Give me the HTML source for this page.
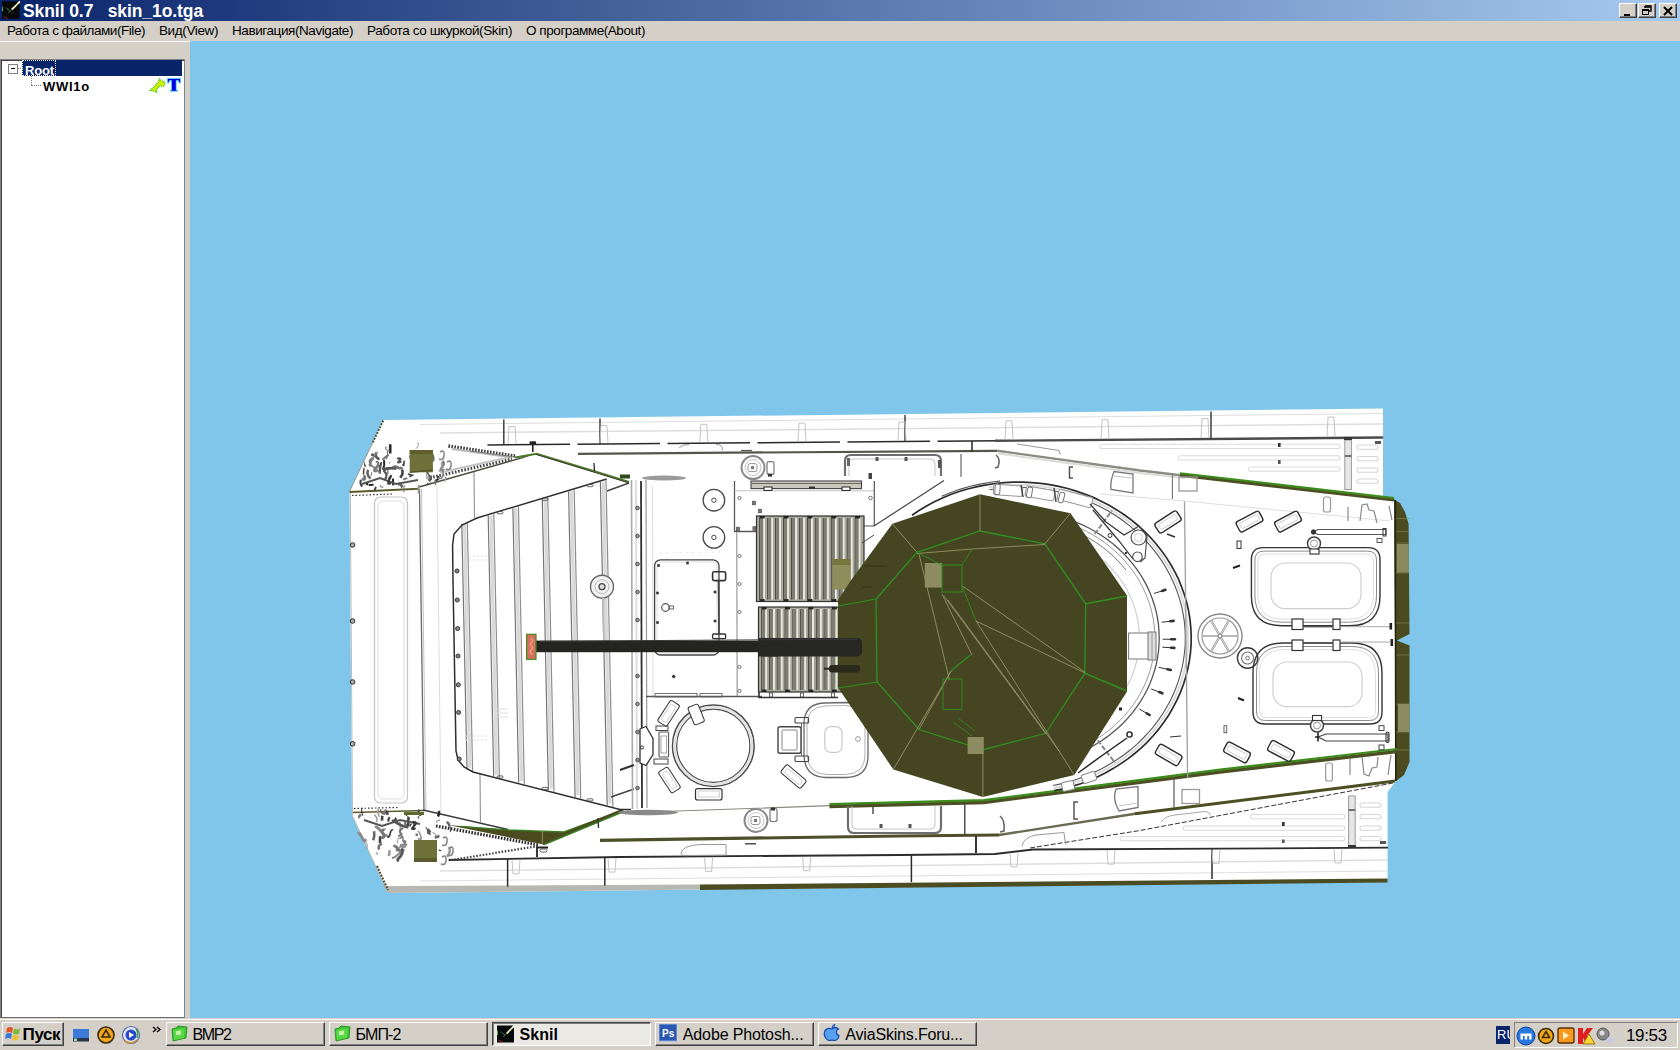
<!DOCTYPE html>
<html lang="ru">
<head>
<meta charset="utf-8">
<title>Sknil 0.7   skin_1o.tga</title>
<style>
html,body{margin:0;padding:0;}
body{width:1680px;height:1050px;overflow:hidden;background:#d4d0c8;position:relative;
 font-family:"Liberation Sans",sans-serif;color:#000;}
.abs{position:absolute;}
.t{position:absolute;white-space:pre;line-height:1;}
/* title bar */
#title{left:0;top:0;width:1680px;height:21px;background:linear-gradient(90deg,#0a246a 0%,#a6caf0 100%);}
#title .cap{left:23px;top:1.300px;font:bold 17.5px "Liberation Sans",sans-serif;color:#fff;letter-spacing:-.08px;}
.tb{position:absolute;top:2.500px;width:16px;height:13.500px;background:#d4d0c8;border:1px solid;border-color:#fff #404040 #404040 #fff;box-shadow:inset -1px -1px 0 #808080;}
/* menu */
#menu{left:0;top:21px;width:1680px;height:20px;background:#d4d0c8;}
#menu .t{top:3px;font-size:13.5px;}
/* left panel */
#left{left:0;top:41px;width:190px;height:977px;background:#d4d0c8;border-top:1px solid #fff;box-sizing:border-box;}
#tree{left:0;top:59px;width:183px;height:957px;background:#fff;border:1px solid;border-color:#808080 #7c8894 #707070 #808080;box-shadow:inset 1px 1px 0 #404040;box-sizing:content-box;}
/* canvas */
#view{left:190px;top:41px;width:1490px;height:977px;background:#7fc6ea;}
/* taskbar */
#task{left:0;top:1018px;width:1680px;height:32px;background:#d4d0c8;border-top:1px solid #d4d0c8;box-shadow:inset 0 1px 0 #fff;box-sizing:border-box;}
.btn{position:absolute;top:3px;height:22px;width:157px;background:#d4d0c8;border:1px solid;border-color:#fff #404040 #404040 #fff;box-shadow:inset -1px -1px 0 #808080;}
.btn .t{left:25.500px;top:4px;font-size:16px;}
.btn.on{border-color:#404040 #fff #fff #404040;box-shadow:inset 1px 1px 0 #808080;background:#ebe9e4;}
</style>
</head>
<body>
<!-- ===== title bar ===== -->
<div id="title" class="abs">
 <svg class="abs" style="left:2px;top:1px" width="19" height="19" viewBox="0 0 19 19">
  <rect x="0" y=".4" width="17.600" height="17.400" fill="#06080a"/>
  <path d="M17.600 -.300L18.200 1.200L10.600 9.300L8.900 8.100Z" fill="#e6e6b4"/>
  <path d="M17.600 -.300L18.200 1.200L16.600 2.900L15.600 1.900Z" fill="#fff"/>
  <path d="M9.700 8.700L6.400 12M4 6.500L8 10.500" stroke="#3c7c34" stroke-width="1"/>
  <rect x="0" y="5.600" width=".9" height="4.800" fill="#60c040"/>
  <path d="M1.500 15.500l2 1 2 1" stroke="#7a1c1c" stroke-width="1.200"/>
  <circle cx="11" cy="12" r=".6" fill="#3c6c3c"/><circle cx="6" cy="8" r=".6" fill="#3c6c3c"/>
 </svg>
 <span class="t cap">Sknil 0.7   skin_1o.tga</span>
 <div class="tb" style="left:1619px"><svg width="16" height="14"><rect x="4" y="10" width="6" height="2" fill="#000"/></svg></div>
 <div class="tb" style="left:1638px"><svg width="16" height="14"><path d="M6 2h6v5h-2M6 2v2M6 3h6" stroke="#000" stroke-width="1.4" fill="none"/><rect x="3.5" y="5.5" width="6" height="5" fill="none" stroke="#000"/><path d="M3 6h7" stroke="#000" stroke-width="2"/></svg></div>
 <div class="tb" style="left:1659px"><svg width="16" height="14"><path d="M4 3l8 8M12 3l-8 8" stroke="#000" stroke-width="2"/></svg></div>
</div>
<!-- ===== menu ===== -->
<div id="menu" class="abs">
 <span class="t" style="left:7px;letter-spacing:-.45px">Работа с файлами(File)</span>
 <span class="t" style="left:159px;letter-spacing:-.38px">Вид(View)</span>
 <span class="t" style="left:232px;letter-spacing:-.42px">Навигация(Navigate)</span>
 <span class="t" style="left:367px;letter-spacing:-.38px">Работа со шкуркой(Skin)</span>
 <span class="t" style="left:526px;letter-spacing:-.44px">О программе(About)</span>
</div>
<!-- ===== left tree panel ===== -->
<div id="left" class="abs"></div>
<div id="tree" class="abs">
 <div class="abs" style="left:21px;top:0;width:160px;height:16px;background:#0a246a"></div>
 <div class="abs" style="left:7px;top:4px;width:8px;height:8px;border:1px solid #808080;background:#fff"></div>
 <div class="abs" style="left:10px;top:8px;width:4px;height:1px;background:#000"></div>
 <div class="abs" style="left:17px;top:8px;width:5px;height:0;border-top:1px dotted #808080"></div>
 <div class="abs" style="left:30px;top:16px;width:0;height:9px;border-left:1px dotted #808080"></div>
 <div class="abs" style="left:30px;top:25px;width:10px;height:0;border-top:1px dotted #808080"></div>
 <span class="t" style="left:24px;top:2.700px;font:bold 13px 'Liberation Sans',sans-serif;color:#fff;letter-spacing:-.15px">Root</span>
 <div class="abs" style="left:21px;top:0;width:34px;height:15px;border:1px dotted #e8e8e8;box-sizing:border-box;height:16px"></div>
 <span class="t" style="left:42px;top:18.600px;font:bold 13px 'Liberation Sans',sans-serif;letter-spacing:.74px">WWI1o</span>
 <svg class="abs" style="left:148px;top:17px" width="34" height="16" viewBox="0 0 34 16">
  <path transform="translate(0 .7)" d="M1.200 12.600L6 8L9.500 4L10.300 1.200L13 3L15.800 4.600L15.600 7L14.500 8.600L11 8.400L8 11L7.500 14.700L5 13.500Z" fill="#d4f000" stroke="#34c028" stroke-width="1.300" stroke-dasharray="1 .8"/>
  <path d="M18.400 1.400H31.500V6.100H30.300L29.300 3.600H27.200V13L28.400 13.200V14.200H21.500V13.200L22.500 13V3.600H20.600L19.600 6.100H18.400Z" fill="#0000e0" stroke="#48e8ff" stroke-width=".7"/>
 </svg>
</div>
<!-- ===== 3D view ===== -->
<div id="view" class="abs"></div>
<!--TANKSTART-->
<svg class="abs" style="left:190px;top:41px" width="1490" height="977" viewBox="190 41 1490 977">
<!-- hull -->
<g id="hull">
<polygon points="383,420 1383,408.5 1383,497 1394,499.5 1396,781 1387.6,792 1387.6,882 388,893 352,815 349.5,492" fill="#fff" stroke="none" stroke-width="1" />
<polygon points="388,893 700,889.5 700,884.5 384,886" fill="#b8b8b2" stroke="none" stroke-width="1" />
<polygon points="700,890 1387.6,882.5 1387.6,878.5 700,884.5" fill="#4c4c22" stroke="none" stroke-width="1" />
<polygon points="1394,499.5 1400,503 1405,512 1408.6,524 1409.5,634 1397,640.5 1409.5,645.5 1409.5,762 1404,775 1396,781" fill="#4b4b1f" stroke="none" stroke-width="1" />
<polygon points="1396.5,544 1408.8,544 1409,572.6 1396.5,572.6" fill="#8a8a5c" stroke="none" stroke-width="1" />
<polygon points="1398,704 1409.5,704 1409.5,732 1398,732" fill="#8c8c62" stroke="none" stroke-width="1" />
<line x1="1395.3" y1="500" x2="1395.8" y2="781" stroke="#26260e" stroke-width="1.6" />
<line x1="1396" y1="518.6" x2="1409.5" y2="518.6" stroke="#8a8a58" stroke-width="0.6" />
<line x1="1396" y1="531.4" x2="1409.5" y2="531.4" stroke="#8a8a58" stroke-width="0.6" />
<line x1="1396" y1="543" x2="1409.5" y2="543" stroke="#8a8a58" stroke-width="0.6" />
<line x1="1396" y1="573" x2="1409.5" y2="573" stroke="#8a8a58" stroke-width="0.6" />
<line x1="1396" y1="623" x2="1409.5" y2="623" stroke="#8a8a58" stroke-width="0.6" />
<line x1="1396" y1="655" x2="1409.5" y2="655" stroke="#8a8a58" stroke-width="0.6" />
<line x1="1396" y1="704" x2="1409.5" y2="704" stroke="#8a8a58" stroke-width="0.6" />
<line x1="1396" y1="732" x2="1409.5" y2="732" stroke="#8a8a58" stroke-width="0.6" />
<line x1="1396" y1="750" x2="1409.5" y2="750" stroke="#8a8a58" stroke-width="0.6" />
<polyline points="487.5,445 1000,440.7" fill="none" stroke="#2a2a2a" stroke-width="1.5" stroke-dasharray="82.5 7.5"/>
<polyline points="995,440.8 1383,437.5" fill="none" stroke="#4a4a4a" stroke-width="2.4" />
<polyline points="448.6,860 620,857 900,855 995,854 1033,849.5 1220,848.6 1388,847.6" fill="none" stroke="#2c2c2c" stroke-width="1.8" />
<polyline points="420,424.5 1383,413.5" fill="none" stroke="#dedede" stroke-width="1" />
<polyline points="440,433 1383,424" fill="none" stroke="#dedede" stroke-width="1.5" />
<polyline points="440,871 1388,860" fill="none" stroke="#dedede" stroke-width="1.5" />
<polyline points="420,881 1388,871" fill="none" stroke="#dedede" stroke-width="1" />
<line x1="503.8" y1="419.6" x2="503.8" y2="444.9" stroke="#333" stroke-width="1.4" />
<line x1="600" y1="418.5" x2="600" y2="444.1" stroke="#333" stroke-width="1.4" />
<line x1="905" y1="415" x2="905" y2="441.5" stroke="#333" stroke-width="1.4" />
<line x1="1211" y1="411.5" x2="1211" y2="438.9" stroke="#333" stroke-width="1.4" />
<line x1="507.6" y1="859" x2="507.6" y2="886.7" stroke="#2c2c2c" stroke-width="1.5" />
<line x1="604.8" y1="857.3" x2="604.8" y2="885.6" stroke="#2c2c2c" stroke-width="1.5" />
<line x1="911.4" y1="854.9" x2="911.4" y2="882.2" stroke="#2c2c2c" stroke-width="1.5" />
<line x1="1212" y1="848.6" x2="1212" y2="878.9" stroke="#2c2c2c" stroke-width="1.5" />
<polyline points="508,443.8 509,426.5 515,426.5 516,443.8" fill="none" stroke="#c4c4c4" stroke-width="1" />
<polyline points="600,443 601,425.5 607,425.5 608,443" fill="none" stroke="#c4c4c4" stroke-width="1" />
<polyline points="699.8,442.2 700.8,424.3 706.8,424.3 707.8,442.2" fill="none" stroke="#c4c4c4" stroke-width="1" />
<polyline points="798,441.4 799,423.2 805,423.2 806,441.4" fill="none" stroke="#c4c4c4" stroke-width="1" />
<polyline points="898,440.5 899,422 905,422 906,440.5" fill="none" stroke="#c4c4c4" stroke-width="1" />
<polyline points="1005,439.6 1006,420.8 1012,420.8 1013,439.6" fill="none" stroke="#c4c4c4" stroke-width="1" />
<polyline points="1101,438.8 1102,419.7 1108,419.7 1109,438.8" fill="none" stroke="#c4c4c4" stroke-width="1" />
<polyline points="1201,438 1202,418.5 1208,418.5 1209,438" fill="none" stroke="#c4c4c4" stroke-width="1" />
<polyline points="1327,436.9 1328,417.1 1334,417.1 1335,436.9" fill="none" stroke="#c4c4c4" stroke-width="1" />
<polyline points="512,859.8 513,873.8 519,873.8 520,859.8" fill="none" stroke="#c4c4c4" stroke-width="1" />
<polyline points="608,858.1 609,872.1 615,872.1 616,858.1" fill="none" stroke="#c4c4c4" stroke-width="1" />
<polyline points="704.6,857.4 705.6,871.4 711.6,871.4 712.6,857.4" fill="none" stroke="#c4c4c4" stroke-width="1" />
<polyline points="802.7,856.7 803.7,870.7 809.7,870.7 810.7,856.7" fill="none" stroke="#c4c4c4" stroke-width="1" />
<polyline points="1010,852.8 1011,866.8 1017,866.8 1018,852.8" fill="none" stroke="#c4c4c4" stroke-width="1" />
<polyline points="1107,850.1 1108,864.1 1114,864.1 1115,850.1" fill="none" stroke="#c4c4c4" stroke-width="1" />
<polyline points="1212,849.6 1213,863.6 1219,863.6 1220,849.6" fill="none" stroke="#c4c4c4" stroke-width="1" />
<polyline points="1334,848.9 1335,862.9 1341,862.9 1342,848.9" fill="none" stroke="#c4c4c4" stroke-width="1" />
<polyline points="578,453.8 997.5,450.8" fill="none" stroke="#555548" stroke-width="2.2" />
<polyline points="997.5,450.8 1140,470.5 1185,475.7" fill="none" stroke="#8c8c84" stroke-width="2.4" />
<polyline points="997.5,453.4 1140,473 1185,478.3" fill="none" stroke="#dcdcd8" stroke-width="2" />
<polyline points="1180,475.2 1394,500" fill="none" stroke="#4e4e24" stroke-width="3.2" />
<polyline points="1180,473.2 1394,498" fill="none" stroke="#3c8c1c" stroke-width="2" />
<polyline points="600,840.3 900,836 999,835" fill="none" stroke="#4e4e2a" stroke-width="3.2" />
<polyline points="999,835 1140,813" fill="none" stroke="#6a6a52" stroke-width="2.4" />
<polyline points="1135,813.8 1395,781" fill="none" stroke="#4e4e24" stroke-width="3" />
<polyline points="620,813 829.5,805.7 983.8,801.5" fill="none" stroke="#8a8a80" stroke-width="1.2" />
<polyline points="829.5,806.5 983.8,802.5 1220,772 1397,751.5" fill="none" stroke="#4e4e24" stroke-width="3.4" />
<polyline points="829.5,804.2 983.8,800.2 1220,769.6 1397,749" fill="none" stroke="#3c8c1c" stroke-width="2.2" />
<polyline points="1030,848 1140,830.5 1393,783" fill="none" stroke="#333" stroke-width="1" stroke-dasharray="5 2"/>
</g>
<!-- front -->
<g id="front">
<line x1="349.5" y1="492" x2="419" y2="488.8" stroke="#5a5a2c" stroke-width="2" />
<line x1="352" y1="495.5" x2="392" y2="494" stroke="#333" stroke-width="1.2" stroke-dasharray="1.5 2"/>
<line x1="352" y1="812.5" x2="424" y2="810.5" stroke="#5a5a2c" stroke-width="1.6" />
<line x1="354" y1="808.5" x2="398" y2="807.5" stroke="#333" stroke-width="1.2" stroke-dasharray="1.5 2"/>
<line x1="419.5" y1="489" x2="424" y2="811" stroke="#6a6a6a" stroke-width="1.3" />
<line x1="421.5" y1="489" x2="426" y2="811" stroke="#c4c4c4" stroke-width="1" />
<rect x="374.5" y="497" width="33" height="306" rx="6" fill="none" stroke="#c4c4c4" stroke-width="1.2" />
<rect x="378" y="501" width="26" height="298" rx="5" fill="none" stroke="#dedede" stroke-width="1" />
<line x1="350.3" y1="493" x2="352.5" y2="815" stroke="#bbb" stroke-width="1" />
<circle cx="352.6" cy="545" r="2.3" fill="#aaa" stroke="#333" stroke-width="1" />
<circle cx="352.6" cy="621" r="2.3" fill="#aaa" stroke="#333" stroke-width="1" />
<circle cx="352.6" cy="682" r="2.3" fill="#aaa" stroke="#333" stroke-width="1" />
<circle cx="352.6" cy="743.8" r="2.3" fill="#aaa" stroke="#333" stroke-width="1" />
<line x1="437" y1="486" x2="441" y2="812" stroke="#dedede" stroke-width="1" />
<line x1="474" y1="472" x2="474.5" y2="518" stroke="#999" stroke-width="1.2" />
<line x1="480" y1="774" x2="480.5" y2="822" stroke="#999" stroke-width="1.2" />
<line x1="383.3" y1="420.5" x2="372" y2="444" stroke="#4a4a24" stroke-width="1.8" stroke-dasharray="2 1.2"/>
<line x1="372" y1="444" x2="349.5" y2="491.5" stroke="#9a9a90" stroke-width="1" />
<polyline points="419,487 522.7,457.6 532,454.5" fill="none" stroke="#4a4a3c" stroke-width="1.3" />
<line x1="448.4" y1="446" x2="515" y2="456" stroke="#3a3a3a" stroke-width="3.4" stroke-dasharray="1.6 1.4"/>
<line x1="452" y1="449" x2="512" y2="457.5" stroke="#bbb" stroke-width="2" />
<line x1="430" y1="477.8" x2="512" y2="459" stroke="#444" stroke-width="3" stroke-dasharray="1.6 1.6"/>
<line x1="440" y1="472.5" x2="508" y2="457.5" stroke="#c4c4c4" stroke-width="2" />
<line x1="470" y1="451" x2="515" y2="457" stroke="#777" stroke-width="1" />
<path d="M386.5 459.4q1.8 -4.3 0.9 -8.6" fill="none" stroke="#666" stroke-width="1" />
<path d="M390.2 453.5q0.1 -4.6 0 -9.3" fill="none" stroke="#2a2a2a" stroke-width="2.6" />
<path d="M364.1 468.1q-0.9 3.3 -0.5 6.5" fill="none" stroke="#444" stroke-width="1.5" />
<path d="M413.5 475.1q-5.3 0.9 -2.6 1.7" fill="none" stroke="#444" stroke-width="1.5" />
<path d="M362.1 486.8q-2.5 -3.6 -1.3 -7.1" fill="none" stroke="#444" stroke-width="2" />
<path d="M407.3 478.2q-4.8 0.7 -2.4 1.4" fill="none" stroke="#777" stroke-width="2" />
<path d="M366.6 482.7q0.8 1.2 0.4 2.4" fill="none" stroke="#2a2a2a" stroke-width="2.6" />
<path d="M426.4 471q5.1 -1.4 2.5 -2.8" fill="none" stroke="#777" stroke-width="1.5" />
<path d="M419.5 463.1q0.9 0.3 0.4 0.5" fill="none" stroke="#999" stroke-width="2.6" />
<path d="M383.3 487.2q-4.6 -0.8 -2.3 -1.6" fill="none" stroke="#999" stroke-width="1.5" />
<path d="M440.1 469.2q5.5 -4.2 2.8 -8.4" fill="none" stroke="#666" stroke-width="2" />
<path d="M387.9 468.1q-0 3 -0 5.9" fill="none" stroke="#444" stroke-width="1" />
<path d="M441.1 470.8q2 -4.4 1 -8.8" fill="none" stroke="#999" stroke-width="2.6" />
<path d="M383 469.6q2 -4.8 1 -9.5" fill="none" stroke="#2a2a2a" stroke-width="2" />
<path d="M372.8 457.7q-5.3 2.7 -2.6 5.4" fill="none" stroke="#777" stroke-width="1.5" />
<path d="M393 485.2q-0 -3.3 -0 -6.7" fill="none" stroke="#2a2a2a" stroke-width="2" />
<path d="M435.7 480.7q4.4 -2.2 2.2 -4.4" fill="none" stroke="#2a2a2a" stroke-width="2" />
<path d="M418.1 468.4q-3.2 -4.2 -1.6 -8.3" fill="none" stroke="#777" stroke-width="1.5" />
<path d="M415.9 448.8q4 -3.2 2 -6.4" fill="none" stroke="#999" stroke-width="1" />
<path d="M370.8 475.8q1.3 -1.8 0.7 -3.6" fill="none" stroke="#777" stroke-width="1" />
<path d="M398.2 483.7q5.4 1.8 2.7 3.6" fill="none" stroke="#666" stroke-width="2.6" />
<path d="M393 469.6q-0.2 -1 -0.1 -2" fill="none" stroke="#777" stroke-width="1" />
<path d="M444.7 469.6q-4.7 1 -2.3 2" fill="none" stroke="#444" stroke-width="1" />
<path d="M407.9 473.9q5.4 1.1 2.7 2.3" fill="none" stroke="#444" stroke-width="1.5" />
<path d="M412 458.8q-3 -1.5 -1.5 -3.1" fill="none" stroke="#999" stroke-width="2.6" />
<path d="M368.8 485.1q5.9 -0.3 3 -0.7" fill="none" stroke="#2a2a2a" stroke-width="2" />
<path d="M365.6 466.5q-1.9 -2.4 -0.9 -4.7" fill="none" stroke="#777" stroke-width="1" />
<path d="M376.1 486.9q-1.7 1.9 -0.8 3.8" fill="none" stroke="#444" stroke-width="2" />
<path d="M444.1 481.4q2.4 -2.4 1.2 -4.8" fill="none" stroke="#999" stroke-width="1.5" />
<path d="M389.3 462.8q0.5 0 0.2 0.1" fill="none" stroke="#777" stroke-width="1.5" />
<path d="M428.9 481q2.9 -2.7 1.4 -5.5" fill="none" stroke="#666" stroke-width="2.6" />
<path d="M389.3 451q-5.7 -2.2 -2.8 -4.4" fill="none" stroke="#999" stroke-width="1.5" />
<path d="M418.9 484.9q-0.6 4.4 -0.3 8.7" fill="none" stroke="#999" stroke-width="2" />
<path d="M365.1 467.2q-0.4 -1.6 -0.2 -3.2" fill="none" stroke="#2a2a2a" stroke-width="1" />
<path d="M400.2 477.7q3.6 -4.2 1.8 -8.3" fill="none" stroke="#444" stroke-width="2.6" />
<path d="M426.8 479.3q-0.3 -3.2 -0.1 -6.4" fill="none" stroke="#999" stroke-width="1" />
<path d="M428.5 484.8q-1.2 -1 -0.6 -2" fill="none" stroke="#444" stroke-width="1.5" />
<path d="M373 458.3q-4.2 4 -2.1 8.1" fill="none" stroke="#777" stroke-width="2.6" />
<path d="M415.8 467.4q0.6 -3.7 0.3 -7.4" fill="none" stroke="#444" stroke-width="1" />
<path d="M404.3 485q-0.8 3.7 -0.4 7.4" fill="none" stroke="#777" stroke-width="1" />
<path d="M380.2 466.1q-3.1 0.9 -1.6 1.7" fill="none" stroke="#999" stroke-width="2.6" />
<path d="M431.4 453.3q2.9 4 1.4 8" fill="none" stroke="#666" stroke-width="2.6" />
<path d="M430.8 482.4q-4.4 -3.5 -2.2 -7" fill="none" stroke="#666" stroke-width="1" />
<path d="M434.8 479.6q1.3 2.8 0.7 5.5" fill="none" stroke="#777" stroke-width="1.5" />
<path d="M370.5 478.6q-4.6 -4.4 -2.3 -8.8" fill="none" stroke="#666" stroke-width="2.6" />
<path d="M427 456.3q0.7 -2.5 0.4 -5" fill="none" stroke="#999" stroke-width="1" />
<polyline points="362,484 380,478 396,484 418,480" fill="none" stroke="#555" stroke-width="2" />
<path d="M393.7 466.8c7.6 -0.6 0.1 1.6 7.8 1.4" fill="none" stroke="#777" stroke-width="2.8" stroke-linecap="round"/>
<path d="M395.3 468.4c-5.6 -1 -6.4 0.7 -12.1 0.4" fill="none" stroke="#555" stroke-width="2.8" stroke-linecap="round"/>
<path d="M430.8 478.9c2.8 2.1 -6.2 -8.7 -3.4 -8.1" fill="none" stroke="#555" stroke-width="1.6" stroke-linecap="round"/>
<path d="M364.5 476.4c1.8 5 -3.1 1.6 -1.3 3.1" fill="none" stroke="#777" stroke-width="2.8" stroke-linecap="round"/>
<path d="M378.4 458.8c-8.9 -7.5 2.8 -1.7 -6.1 -3.9" fill="none" stroke="#555" stroke-width="2.8" stroke-linecap="round"/>
<path d="M379.8 472.7c0.2 -8.5 1.1 -7.1 1.4 -9.6" fill="none" stroke="#555" stroke-width="2.2" stroke-linecap="round"/>
<path d="M389.1 478.7c6.3 -9 -5.2 7.4 1 4.7" fill="none" stroke="#3a3a3a" stroke-width="2.2" stroke-linecap="round"/>
<path d="M400.6 461.9c-7.7 2.3 5 -4.1 -2.7 -3.4" fill="none" stroke="#555" stroke-width="2.2" stroke-linecap="round"/>
<path d="M385.3 478.9c4.6 -6.9 -4.6 -7.2 0.1 -9.2" fill="none" stroke="#555" stroke-width="2.2" stroke-linecap="round"/>
<path d="M387.8 455.3c1.1 -0.9 -5.6 4.2 -4.5 3.9" fill="none" stroke="#777" stroke-width="2.2" stroke-linecap="round"/>
<path d="M377.1 453.5c-1.4 -5.2 -4.1 8.5 -5.6 6.9" fill="none" stroke="#8a8a8a" stroke-width="1.6" stroke-linecap="round"/>
<path d="M376.7 461.8c6.4 2.6 -7.2 8.8 -0.8 9.6" fill="none" stroke="#777" stroke-width="2.2" stroke-linecap="round"/>
<path d="M380.1 473.2c-3.1 -3.7 -7.7 -7.4 -10.8 -8.5" fill="none" stroke="#777" stroke-width="1.6" stroke-linecap="round"/>
<path d="M404.1 461.2c-0.8 8.3 -0.3 1.3 -1.1 3.8" fill="none" stroke="#3a3a3a" stroke-width="1.6" stroke-linecap="round"/>
<path d="M440 452q5 -3 4 4q-1 5 -5 3" fill="none" stroke="#888" stroke-width="1.6" />
<path d="M447 462q5 -3 4 4q-1 5 -5 3" fill="none" stroke="#888" stroke-width="1.6" />
<path d="M439 471q5 -3 4 4q-1 5 -5 3" fill="none" stroke="#888" stroke-width="1.6" />
<rect x="409.7" y="450" width="23.2" height="22.3" rx="0" fill="#70703a" stroke="none" stroke-width="1" />
<rect x="409.7" y="450" width="23.2" height="4" rx="0" fill="#5e5e2e" stroke="none" stroke-width="1" />
<line x1="409.7" y1="472.3" x2="433" y2="470" stroke="#56562a" stroke-width="1.6" />
<polyline points="515,457.6 536.6,453.8 600,473 629,482" fill="none" stroke="#4c7a2a" stroke-width="2" />
<polyline points="536.6,454.6 600,474 629,483" fill="none" stroke="#3c3c30" stroke-width="1" />
<rect x="529.6" y="441.4" width="6.5" height="3" rx="0" fill="#222" stroke="none" stroke-width="1" />
<line x1="532.8" y1="441.4" x2="532.8" y2="452" stroke="#222" stroke-width="1.6" />
<line x1="594" y1="463" x2="594.5" y2="471" stroke="#333" stroke-width="1.4" />
<line x1="352" y1="815" x2="388" y2="893" stroke="#b8b8b0" stroke-width="1" />
<line x1="377" y1="866" x2="388" y2="890" stroke="#4a4a24" stroke-width="2" stroke-dasharray="2 1.2"/>
<polyline points="423,810 508,829.5" fill="none" stroke="#3a3a3a" stroke-width="1.3" />
<polygon points="448,825 508,830 564,832 623,810.2 542.4,844.2" fill="#4b4b1f" stroke="none" stroke-width="1" />
<polyline points="460,826.5 508,830 564,832 623,810.2" fill="none" stroke="#3c7a22" stroke-width="1.4" />
<line x1="542.4" y1="843.6" x2="623" y2="810.2" stroke="#4b4b1f" stroke-width="3.4" />
<line x1="544" y1="844.6" x2="623" y2="811.8" stroke="#3c7a22" stroke-width="1.6" />
<line x1="542.4" y1="830" x2="542.4" y2="844" stroke="#a0a070" stroke-width="0.8" />
<line x1="436" y1="826" x2="539" y2="845" stroke="#2a2a2a" stroke-width="3.2" stroke-dasharray="1.6 1.4"/>
<line x1="451" y1="860" x2="539" y2="846" stroke="#444" stroke-width="2.2" stroke-dasharray="1.6 1.6"/>
<path d="M428 828.9q0.7 2.6 0.4 5.2" fill="none" stroke="#444" stroke-width="2.6" />
<path d="M388.7 856.1q1.3 -3 0.6 -6" fill="none" stroke="#999" stroke-width="2.6" />
<path d="M404.7 845.2q0.1 -2.5 0 -5" fill="none" stroke="#666" stroke-width="2" />
<path d="M441.2 850.7q-3.6 -0.5 -1.8 -1" fill="none" stroke="#2a2a2a" stroke-width="1" />
<path d="M394.5 821q2.1 -0.7 1 -1.4" fill="none" stroke="#777" stroke-width="2" />
<path d="M429 851q-4.1 2.2 -2.1 4.3" fill="none" stroke="#999" stroke-width="1.5" />
<path d="M382.3 815.8q-0.4 2.5 -0.2 4.9" fill="none" stroke="#444" stroke-width="2.6" />
<path d="M437.9 816.4q2 -2.8 1 -5.5" fill="none" stroke="#2a2a2a" stroke-width="2.6" />
<path d="M389.8 817.2q-2.2 2.2 -1.1 4.4" fill="none" stroke="#444" stroke-width="2" />
<path d="M408.8 825.8q-5.8 -1.7 -2.9 -3.4" fill="none" stroke="#666" stroke-width="2" />
<path d="M405.1 814.5q5.8 2.9 2.9 5.8" fill="none" stroke="#444" stroke-width="1" />
<path d="M383.4 814.3q3.3 -2.3 1.7 -4.6" fill="none" stroke="#777" stroke-width="2.6" />
<path d="M434.8 837.5q5.4 -0.9 2.7 -1.9" fill="none" stroke="#666" stroke-width="2.6" />
<path d="M421.6 814.9q-5.3 1.9 -2.7 3.8" fill="none" stroke="#2a2a2a" stroke-width="1" />
<path d="M383.7 814.1q-4.9 -2.4 -2.5 -4.8" fill="none" stroke="#666" stroke-width="1.5" />
<path d="M399.9 821.8q0.6 4.3 0.3 8.5" fill="none" stroke="#999" stroke-width="1.5" />
<path d="M363.8 839.4q5.3 4.7 2.6 9.4" fill="none" stroke="#999" stroke-width="1" />
<path d="M375.9 853.3q1.5 0.3 0.8 0.6" fill="none" stroke="#777" stroke-width="2" />
<path d="M399.2 837.3q-2.8 3 -1.4 6.1" fill="none" stroke="#999" stroke-width="1" />
<path d="M408.5 817.1q-0.3 4.3 -0.2 8.7" fill="none" stroke="#444" stroke-width="2.6" />
<path d="M417.8 830.7q4.7 4.7 2.3 9.4" fill="none" stroke="#999" stroke-width="1.5" />
<path d="M446.5 821.9q4 2.1 2 4.1" fill="none" stroke="#777" stroke-width="2.6" />
<path d="M447.1 856.7q4 -4.9 2 -9.7" fill="none" stroke="#999" stroke-width="2.6" />
<path d="M374.4 814.8q4.1 3.7 2 7.4" fill="none" stroke="#999" stroke-width="1.5" />
<path d="M421 814.3q-3.8 -2.3 -1.9 -4.6" fill="none" stroke="#444" stroke-width="2" />
<path d="M392 821.4q5.8 -1.8 2.9 -3.5" fill="none" stroke="#444" stroke-width="2" />
<path d="M379.2 816.9q-2 -4.2 -1 -8.3" fill="none" stroke="#999" stroke-width="1.5" />
<path d="M381.8 843.3q-4.9 3.2 -2.5 6.3" fill="none" stroke="#777" stroke-width="2.6" />
<path d="M411.6 823.9q-2.4 1.3 -1.2 2.6" fill="none" stroke="#444" stroke-width="1.5" />
<path d="M417.9 839.8q4.5 -1.1 2.3 -2.2" fill="none" stroke="#999" stroke-width="2.6" />
<path d="M373.2 840.3q1.7 -4.6 0.9 -9.1" fill="none" stroke="#666" stroke-width="2.6" />
<path d="M424.6 845.5q-4.3 0.2 -2.2 0.5" fill="none" stroke="#666" stroke-width="1" />
<path d="M432.7 832.6q4.7 1.8 2.4 3.7" fill="none" stroke="#777" stroke-width="1" />
<path d="M362.7 815.7q-1.7 -4 -0.8 -7.9" fill="none" stroke="#2a2a2a" stroke-width="1" />
<path d="M415.2 834.8q2.2 -0.1 1.1 -0.2" fill="none" stroke="#444" stroke-width="2.6" />
<path d="M430.2 841.7q0 0.4 0 0.7" fill="none" stroke="#666" stroke-width="1" />
<path d="M425.6 827.3q3.7 3.5 1.9 6.9" fill="none" stroke="#777" stroke-width="1.5" />
<path d="M380.3 836.1q-0.5 3.5 -0.2 6.9" fill="none" stroke="#444" stroke-width="2.6" />
<path d="M440.1 820q-5.4 1.3 -2.7 2.7" fill="none" stroke="#777" stroke-width="1" />
<path d="M412.8 821.5q1.8 1.9 0.9 3.9" fill="none" stroke="#666" stroke-width="1.5" />
<path d="M361.1 814.5q-2.8 1.7 -1.4 3.4" fill="none" stroke="#777" stroke-width="2.6" />
<path d="M385.6 829.3q-0.4 -0.3 -0.2 -0.7" fill="none" stroke="#444" stroke-width="1.5" />
<path d="M387.4 814.9q-0.3 -2.1 -0.2 -4.2" fill="none" stroke="#444" stroke-width="2.6" />
<path d="M447.5 823.6q5 4.3 2.5 8.6" fill="none" stroke="#444" stroke-width="1" />
<polyline points="364,820 382,826 400,820 420,824" fill="none" stroke="#555" stroke-width="2" />
<path d="M396.7 850.4c7.1 -7.5 1.7 -1.4 8.7 -3.6" fill="none" stroke="#8a8a8a" stroke-width="1.6" stroke-linecap="round"/>
<path d="M414.8 828.6c-8.7 2.2 7.2 -7.1 -1.5 -6.4" fill="none" stroke="#3a3a3a" stroke-width="2.2" stroke-linecap="round"/>
<path d="M365.4 840.1c-1.2 4.9 -5.3 -8.4 -6.5 -6.9" fill="none" stroke="#8a8a8a" stroke-width="2.8" stroke-linecap="round"/>
<path d="M376 826.9c4.2 1.2 6.5 8.4 10.7 8.8" fill="none" stroke="#8a8a8a" stroke-width="2.8" stroke-linecap="round"/>
<path d="M400.2 838.3c5.7 -5.8 -0.3 5.2 5.4 3.5" fill="none" stroke="#777" stroke-width="1.6" stroke-linecap="round"/>
<path d="M387.9 837.1c3.1 0.4 1.5 -7.5 4.6 -7.4" fill="none" stroke="#3a3a3a" stroke-width="1.6" stroke-linecap="round"/>
<path d="M403.8 850.1c-3.9 1.6 -7 7.2 -11 7.7" fill="none" stroke="#8a8a8a" stroke-width="2.2" stroke-linecap="round"/>
<path d="M402.4 828.3c-7.1 5.1 3.7 5.9 -3.3 7.4" fill="none" stroke="#777" stroke-width="2.2" stroke-linecap="round"/>
<path d="M402.2 849.4c1.7 8 -6 8.6 -4.3 11" fill="none" stroke="#555" stroke-width="2.8" stroke-linecap="round"/>
<path d="M393.1 820.7c5.6 3.4 8.5 5.5 14.1 6.5" fill="none" stroke="#555" stroke-width="2.8" stroke-linecap="round"/>
<path d="M430.1 834.2c-7.3 -8.7 5.2 -0.2 -2.1 -2.8" fill="none" stroke="#555" stroke-width="1.6" stroke-linecap="round"/>
<path d="M382.5 837.5c4.6 -0.7 -3.7 -7.4 0.9 -7.6" fill="none" stroke="#777" stroke-width="2.8" stroke-linecap="round"/>
<path d="M402.1 846c-4.4 -1.4 7.2 -1 2.8 -1.4" fill="none" stroke="#8a8a8a" stroke-width="2.8" stroke-linecap="round"/>
<path d="M394.5 846c7.1 3.4 -1.6 3.5 5.5 4.5" fill="none" stroke="#777" stroke-width="2.8" stroke-linecap="round"/>
<path d="M443 838q5 -3 4 4q-1 5 -5 3" fill="none" stroke="#888" stroke-width="1.6" />
<path d="M449 848q5 -3 4 4q-1 5 -5 3" fill="none" stroke="#888" stroke-width="1.6" />
<path d="M442 857q5 -3 4 4q-1 5 -5 3" fill="none" stroke="#888" stroke-width="1.6" />
<rect x="414" y="840" width="23" height="22" rx="0" fill="#70703a" stroke="none" stroke-width="1" />
<rect x="414" y="858" width="23" height="4" rx="0" fill="#5a5a2c" stroke="none" stroke-width="1" />
<rect x="404" y="812" width="20" height="3" rx="0" fill="#5a6a2c" stroke="none" stroke-width="1" />
<polyline points="537,857 537,847.5 548,847.5" fill="none" stroke="#222" stroke-width="1.8" />
<rect x="540" y="849" width="7" height="3" rx="1.5" fill="none" stroke="#333" stroke-width="0.8" />
<line x1="598" y1="818" x2="598.5" y2="828" stroke="#333" stroke-width="1.4" />
<line x1="461.8" y1="523.6" x2="467" y2="769.5" stroke="#767676" stroke-width="1.2" />
<line x1="467.3" y1="521.9" x2="472.6" y2="770.9" stroke="#8e8e8e" stroke-width="1.2" />
<line x1="464.6" y1="523.7" x2="469.8" y2="767.9" stroke="#dadada" stroke-width="3.4" />
<line x1="488.2" y1="515.6" x2="493.7" y2="776.3" stroke="#767676" stroke-width="1.2" />
<line x1="493.8" y1="514" x2="499.4" y2="777.7" stroke="#8e8e8e" stroke-width="1.2" />
<line x1="491" y1="515.7" x2="496.5" y2="774.7" stroke="#dadada" stroke-width="3.4" />
<line x1="512.9" y1="508.2" x2="518.7" y2="782.6" stroke="#767676" stroke-width="1.2" />
<line x1="518.4" y1="506.5" x2="524.3" y2="784.1" stroke="#8e8e8e" stroke-width="1.2" />
<line x1="515.6" y1="508.2" x2="521.5" y2="781" stroke="#dadada" stroke-width="3.4" />
<line x1="542.3" y1="499.4" x2="548.4" y2="790.2" stroke="#767676" stroke-width="1.2" />
<line x1="547.8" y1="497.7" x2="554" y2="791.7" stroke="#8e8e8e" stroke-width="1.2" />
<line x1="545.1" y1="499.3" x2="551.2" y2="788.6" stroke="#dadada" stroke-width="3.4" />
<line x1="568.6" y1="491.5" x2="575.1" y2="797" stroke="#767676" stroke-width="1.2" />
<line x1="574.2" y1="489.8" x2="580.7" y2="798.5" stroke="#8e8e8e" stroke-width="1.2" />
<line x1="571.4" y1="491.3" x2="577.9" y2="795.3" stroke="#dadada" stroke-width="3.4" />
<line x1="600.4" y1="481.9" x2="607.2" y2="805.2" stroke="#767676" stroke-width="1.2" />
<line x1="606" y1="480.2" x2="612.9" y2="806.7" stroke="#8e8e8e" stroke-width="1.2" />
<line x1="603.2" y1="481.7" x2="610" y2="803.5" stroke="#dadada" stroke-width="3.4" />
<polyline points="606.7,479 477,518 462,525 454,534 452.6,545 453,580 456,751 458,760 464,767 473,772 620,809.5 631,809.5" fill="none" stroke="#2e2e2e" stroke-width="1.5" />
<circle cx="457" cy="571" r="2" fill="#888" stroke="#333" stroke-width="1" />
<circle cx="457.3" cy="600" r="2" fill="#888" stroke="#333" stroke-width="1" />
<circle cx="457.6" cy="628.6" r="2" fill="#888" stroke="#333" stroke-width="1" />
<circle cx="458" cy="656" r="2" fill="#888" stroke="#333" stroke-width="1" />
<circle cx="458.3" cy="684.8" r="2" fill="#888" stroke="#333" stroke-width="1" />
<circle cx="458.6" cy="712.4" r="2" fill="#888" stroke="#333" stroke-width="1" />
<circle cx="459.2" cy="759" r="2" fill="#888" stroke="#333" stroke-width="1" />
<rect x="497" y="511.6" width="6" height="2.2" rx="1" fill="none" stroke="#444" stroke-width="0.8" />
<rect x="497" y="775.9" width="6" height="2.2" rx="1" fill="none" stroke="#444" stroke-width="0.8" />
<rect x="542" y="498.1" width="6" height="2.2" rx="1" fill="none" stroke="#444" stroke-width="0.8" />
<rect x="542" y="787.4" width="6" height="2.2" rx="1" fill="none" stroke="#444" stroke-width="0.8" />
<rect x="587" y="484.5" width="6" height="2.2" rx="1" fill="none" stroke="#444" stroke-width="0.8" />
<rect x="587" y="798.8" width="6" height="2.2" rx="1" fill="none" stroke="#444" stroke-width="0.8" />
<line x1="465" y1="556" x2="487" y2="556" stroke="#dedede" stroke-width="1" stroke-dasharray="2 2"/>
<line x1="465" y1="560" x2="487" y2="560" stroke="#dedede" stroke-width="1" stroke-dasharray="2 2"/>
<line x1="465" y1="736" x2="487" y2="736" stroke="#dedede" stroke-width="1" stroke-dasharray="2 2"/>
<line x1="465" y1="740" x2="487" y2="740" stroke="#dedede" stroke-width="1" stroke-dasharray="2 2"/>
<line x1="497" y1="709" x2="508" y2="709" stroke="#dedede" stroke-width="1" />
<line x1="497" y1="713" x2="508" y2="713" stroke="#dedede" stroke-width="1" />
<line x1="497" y1="717" x2="508" y2="717" stroke="#dedede" stroke-width="1" />
<circle cx="602" cy="586.7" r="11.5" fill="#f2f2f2" stroke="#666" stroke-width="1.4" />
<circle cx="602" cy="586.7" r="7" fill="none" stroke="#bbb" stroke-width="1" />
<circle cx="602" cy="586.7" r="3" fill="#ddd" stroke="#444" stroke-width="1.2" />
<line x1="603" y1="598" x2="604" y2="640" stroke="#bbb" stroke-width="2" />
<line x1="607" y1="491" x2="629" y2="483" stroke="#444" stroke-width="1.6" />
<line x1="611" y1="797" x2="634" y2="789" stroke="#444" stroke-width="1.6" />
<line x1="631.5" y1="480" x2="632.5" y2="809" stroke="#aaa" stroke-width="1.6" />
<line x1="636" y1="480" x2="637" y2="809" stroke="#dedede" stroke-width="2" />
<line x1="641" y1="481" x2="642" y2="808" stroke="#2e2e2e" stroke-width="1.8" />
<line x1="646" y1="480" x2="647" y2="808" stroke="#999" stroke-width="1.2" />
<circle cx="637.5" cy="508" r="1.8" fill="#999" stroke="#444" stroke-width="0.9" />
<circle cx="637.5" cy="536" r="1.8" fill="#999" stroke="#444" stroke-width="0.9" />
<circle cx="637.5" cy="564" r="1.8" fill="#999" stroke="#444" stroke-width="0.9" />
<circle cx="637.5" cy="592" r="1.8" fill="#999" stroke="#444" stroke-width="0.9" />
<circle cx="637.5" cy="620" r="1.8" fill="#999" stroke="#444" stroke-width="0.9" />
<circle cx="637.5" cy="676" r="1.8" fill="#999" stroke="#444" stroke-width="0.9" />
<circle cx="637.5" cy="704" r="1.8" fill="#999" stroke="#444" stroke-width="0.9" />
<circle cx="637.5" cy="732" r="1.8" fill="#999" stroke="#444" stroke-width="0.9" />
<circle cx="637.5" cy="760" r="1.8" fill="#999" stroke="#444" stroke-width="0.9" />
<circle cx="637.5" cy="788" r="1.8" fill="#999" stroke="#444" stroke-width="0.9" />
</g>
<!-- mid -->
<g id="mid">
<circle cx="753" cy="467.6" r="11.5" fill="none" stroke="#8a8a8a" stroke-width="2" />
<circle cx="753" cy="467.6" r="8" fill="none" stroke="#c4c4c4" stroke-width="1" />
<rect x="748" y="463.6" width="9" height="8" rx="2" fill="none" stroke="#999" stroke-width="1" />
<rect x="751" y="466.1" width="3" height="3" rx="0" fill="#777" stroke="none" stroke-width="1" />
<rect x="767" y="461.6" width="7" height="13" rx="2" fill="none" stroke="#777" stroke-width="1.2" />
<rect x="768" y="473.6" width="4" height="3" rx="0" fill="#333" stroke="none" stroke-width="1" />
<circle cx="756" cy="820.5" r="11.5" fill="none" stroke="#8a8a8a" stroke-width="2" />
<circle cx="756" cy="820.5" r="8" fill="none" stroke="#c4c4c4" stroke-width="1" />
<rect x="751" y="816.5" width="9" height="8" rx="2" fill="none" stroke="#999" stroke-width="1" />
<rect x="754" y="819" width="3" height="3" rx="0" fill="#777" stroke="none" stroke-width="1" />
<rect x="770" y="808.5" width="7" height="13" rx="2" fill="none" stroke="#777" stroke-width="1.2" />
<rect x="771" y="807.5" width="4" height="3" rx="0" fill="#333" stroke="none" stroke-width="1" />
<path d="M845 476V461q0-6 6-6H935q6 0 6 6V476" fill="none" stroke="#6e6e6e" stroke-width="2.2" />
<path d="M849 476V463q0-4 4-4H931q4 0 4 4V476" fill="none" stroke="#c4c4c4" stroke-width="1" />
<rect x="875.5" y="457" width="3" height="4" rx="0" fill="#555" stroke="none" stroke-width="1" />
<rect x="904.5" y="457" width="3" height="4" rx="0" fill="#555" stroke="none" stroke-width="1" />
<rect x="847" y="458" width="3" height="8" rx="0" fill="#666" stroke="none" stroke-width="1" />
<rect x="938" y="460" width="3" height="8" rx="0" fill="#555" stroke="none" stroke-width="1" />
<path d="M848 806V827q0 6 6 6H935q6 0 6-6V806" fill="none" stroke="#6e6e6e" stroke-width="2.2" />
<path d="M852 806V825q0 4 4 4H931q4 0 4-4V806" fill="none" stroke="#c4c4c4" stroke-width="1" />
<rect x="879.5" y="824" width="3" height="4" rx="0" fill="#555" stroke="none" stroke-width="1" />
<rect x="908.5" y="824" width="3" height="4" rx="0" fill="#555" stroke="none" stroke-width="1" />
<line x1="873" y1="806" x2="873" y2="814" stroke="#444" stroke-width="1.4" />
<path d="M679 448q4-4 10-3.500M716 444.500q8 0 6 6" fill="none" stroke="#999" stroke-width="1" />
<line x1="741" y1="450.5" x2="752" y2="450.5" stroke="#555" stroke-width="1.2" />
<path d="M726 844.500L700 844.500q-18 1-19 9q1 3 8 2L726 855z" fill="none" stroke="#999" stroke-width="1" />
<line x1="745" y1="843.8" x2="756" y2="843.8" stroke="#444" stroke-width="1.4" />
<ellipse cx="664" cy="478" rx="22" ry="2.6" fill="#9a9a9a" stroke="none" stroke-width="1" />
<ellipse cx="648" cy="812.5" rx="30" ry="2.8" fill="#8a8a8a" stroke="none" stroke-width="1" />
<rect x="620" y="474.5" width="10" height="4" rx="0" fill="#2e4a1a" stroke="none" stroke-width="1" />
<line x1="652.5" y1="486" x2="653" y2="696" stroke="#dedede" stroke-width="1" />
<circle cx="713.9" cy="500.2" r="10.8" fill="none" stroke="#4a4a4a" stroke-width="1.3" />
<circle cx="713.9" cy="500.2" r="2.2" fill="none" stroke="#444" stroke-width="1" />
<circle cx="713.9" cy="537.4" r="10.8" fill="none" stroke="#4a4a4a" stroke-width="1.3" />
<circle cx="713.9" cy="537.4" r="2.2" fill="none" stroke="#444" stroke-width="1" />
<rect x="654.6" y="559.8" width="64.4" height="95.2" rx="6" fill="none" stroke="#444" stroke-width="1.3" />
<rect x="657" y="562" width="60" height="91" rx="5" fill="none" stroke="#dedede" stroke-width="1" />
<rect x="712.6" y="571.8" width="13" height="8.8" rx="1.5" fill="none" stroke="#333" stroke-width="1.6" />
<rect x="712.6" y="634" width="13" height="4.6" rx="1" fill="none" stroke="#333" stroke-width="1.4" />
<line x1="718.5" y1="580" x2="719" y2="634" stroke="#444" stroke-width="1.6" />
<circle cx="665.5" cy="607.5" r="3.8" fill="none" stroke="#555" stroke-width="1.2" />
<rect x="669" y="606" width="4.5" height="3" rx="0" fill="none" stroke="#555" stroke-width="0.9" />
<rect x="657.2" y="564.2" width="2.6" height="2.6" rx="0" fill="#333" stroke="none" stroke-width="1" />
<rect x="686.2" y="561.7" width="2.6" height="2.6" rx="0" fill="#333" stroke="none" stroke-width="1" />
<rect x="656.2" y="591.7" width="2.6" height="2.6" rx="0" fill="#333" stroke="none" stroke-width="1" />
<rect x="656.2" y="621.2" width="2.6" height="2.6" rx="0" fill="#333" stroke="none" stroke-width="1" />
<rect x="713.7" y="590.7" width="2.6" height="2.6" rx="0" fill="#333" stroke="none" stroke-width="1" />
<rect x="713.7" y="619.7" width="2.6" height="2.6" rx="0" fill="#333" stroke="none" stroke-width="1" />
<rect x="672.3" y="675" width="3" height="3" rx="0" fill="#333" stroke="none" stroke-width="1" transform="rotate(30 673.6 676.3)"/>
<line x1="660" y1="553" x2="720" y2="552" stroke="#dedede" stroke-width="1" stroke-dasharray="1.5 5"/>
<polyline points="734.5,481 734.5,531.5 756,531.5" fill="none" stroke="#5a5a5a" stroke-width="1.3" />
<polyline points="736.7,532 737.2,697" fill="none" stroke="#a8a8a8" stroke-width="1.4" />
<polyline points="734.5,490.8 874,490.8" fill="none" stroke="#c4c4c4" stroke-width="1" />
<circle cx="739.5" cy="498" r="1.6" fill="none" stroke="#666" stroke-width="0.9" />
<circle cx="739.5" cy="556" r="1.6" fill="none" stroke="#666" stroke-width="0.9" />
<circle cx="739.5" cy="584" r="1.6" fill="none" stroke="#666" stroke-width="0.9" />
<circle cx="739.5" cy="612" r="1.6" fill="none" stroke="#666" stroke-width="0.9" />
<circle cx="739.5" cy="667" r="1.6" fill="none" stroke="#666" stroke-width="0.9" />
<circle cx="739.5" cy="691" r="1.6" fill="none" stroke="#666" stroke-width="0.9" />
<rect x="752.4" y="501.2" width="3.2" height="3.6" rx="0" fill="#777" stroke="#444" stroke-width="0.6" />
<rect x="758.4" y="509.2" width="3.2" height="3.6" rx="0" fill="#777" stroke="#444" stroke-width="0.6" />
<rect x="736.4" y="527.2" width="3.2" height="3.6" rx="0" fill="#777" stroke="#444" stroke-width="0.6" />
<rect x="752.9" y="526.7" width="3.2" height="3.6" rx="0" fill="#777" stroke="#444" stroke-width="0.6" />
<rect x="751" y="481" width="110.5" height="7.6" rx="0" fill="#c9c9c0" stroke="#444" stroke-width="1.1" />
<line x1="752" y1="483.5" x2="861" y2="483.5" stroke="#6a6a5a" stroke-width="1" />
<rect x="764" y="487" width="8" height="3.4" rx="0" fill="#fff" stroke="#222" stroke-width="1" />
<rect x="842" y="487" width="8" height="3.4" rx="0" fill="#fff" stroke="#222" stroke-width="1" />
<rect x="809" y="486.5" width="6" height="2.5" rx="0" fill="#333" stroke="none" stroke-width="1" />
<polyline points="874.3,481 874.3,526" fill="none" stroke="#555" stroke-width="1.2" />
<rect x="868.5" y="473" width="3.5" height="6" rx="0" fill="#444" stroke="none" stroke-width="1" />
<circle cx="870.5" cy="498" r="1.8" fill="none" stroke="#666" stroke-width="0.9" />
<polyline points="864,526 874.3,526" fill="none" stroke="#555" stroke-width="1" />
<rect x="756.5" y="516" width="107.5" height="85.5" rx="0" fill="#adada0" stroke="#333" stroke-width="1.2" />
<rect x="759.1" y="518" width="1.1" height="81.5" rx="0" fill="#4a4a44" stroke="none" stroke-width="1" />
<rect x="760.2" y="518" width="3" height="81.5" rx="0" fill="#7e7e70" stroke="none" stroke-width="1" />
<rect x="763.2" y="518" width="2" height="81.5" rx="0" fill="#e8e8e0" stroke="none" stroke-width="1" />
<rect x="765.2" y="518" width="1" height="81.5" rx="0" fill="#a4a49a" stroke="none" stroke-width="1" />
<rect x="767.1" y="518" width="1.1" height="81.5" rx="0" fill="#4a4a44" stroke="none" stroke-width="1" />
<rect x="768.2" y="518" width="3" height="81.5" rx="0" fill="#7e7e70" stroke="none" stroke-width="1" />
<rect x="771.2" y="518" width="2" height="81.5" rx="0" fill="#e8e8e0" stroke="none" stroke-width="1" />
<rect x="773.2" y="518" width="1" height="81.5" rx="0" fill="#a4a49a" stroke="none" stroke-width="1" />
<rect x="775" y="518" width="1.1" height="81.5" rx="0" fill="#4a4a44" stroke="none" stroke-width="1" />
<rect x="776.1" y="518" width="3" height="81.5" rx="0" fill="#7e7e70" stroke="none" stroke-width="1" />
<rect x="779.1" y="518" width="2" height="81.5" rx="0" fill="#e8e8e0" stroke="none" stroke-width="1" />
<rect x="781.1" y="518" width="1" height="81.5" rx="0" fill="#a4a49a" stroke="none" stroke-width="1" />
<rect x="783" y="518" width="1.1" height="81.5" rx="0" fill="#4a4a44" stroke="none" stroke-width="1" />
<rect x="784.1" y="518" width="3" height="81.5" rx="0" fill="#7e7e70" stroke="none" stroke-width="1" />
<rect x="787.1" y="518" width="2" height="81.5" rx="0" fill="#e8e8e0" stroke="none" stroke-width="1" />
<rect x="789.1" y="518" width="1" height="81.5" rx="0" fill="#a4a49a" stroke="none" stroke-width="1" />
<rect x="790.9" y="518" width="1.1" height="81.5" rx="0" fill="#4a4a44" stroke="none" stroke-width="1" />
<rect x="792" y="518" width="3" height="81.5" rx="0" fill="#7e7e70" stroke="none" stroke-width="1" />
<rect x="795" y="518" width="2" height="81.5" rx="0" fill="#e8e8e0" stroke="none" stroke-width="1" />
<rect x="797" y="518" width="1" height="81.5" rx="0" fill="#a4a49a" stroke="none" stroke-width="1" />
<rect x="798.9" y="518" width="1.1" height="81.5" rx="0" fill="#4a4a44" stroke="none" stroke-width="1" />
<rect x="800" y="518" width="3" height="81.5" rx="0" fill="#7e7e70" stroke="none" stroke-width="1" />
<rect x="803" y="518" width="2" height="81.5" rx="0" fill="#e8e8e0" stroke="none" stroke-width="1" />
<rect x="805" y="518" width="1" height="81.5" rx="0" fill="#a4a49a" stroke="none" stroke-width="1" />
<rect x="806.9" y="518" width="1.1" height="81.5" rx="0" fill="#4a4a44" stroke="none" stroke-width="1" />
<rect x="808" y="518" width="3" height="81.5" rx="0" fill="#7e7e70" stroke="none" stroke-width="1" />
<rect x="811" y="518" width="2" height="81.5" rx="0" fill="#e8e8e0" stroke="none" stroke-width="1" />
<rect x="813" y="518" width="1" height="81.5" rx="0" fill="#a4a49a" stroke="none" stroke-width="1" />
<rect x="814.8" y="518" width="1.1" height="81.5" rx="0" fill="#4a4a44" stroke="none" stroke-width="1" />
<rect x="815.9" y="518" width="3" height="81.5" rx="0" fill="#7e7e70" stroke="none" stroke-width="1" />
<rect x="818.9" y="518" width="2" height="81.5" rx="0" fill="#e8e8e0" stroke="none" stroke-width="1" />
<rect x="820.9" y="518" width="1" height="81.5" rx="0" fill="#a4a49a" stroke="none" stroke-width="1" />
<rect x="822.8" y="518" width="1.1" height="81.5" rx="0" fill="#4a4a44" stroke="none" stroke-width="1" />
<rect x="823.9" y="518" width="3" height="81.5" rx="0" fill="#7e7e70" stroke="none" stroke-width="1" />
<rect x="826.9" y="518" width="2" height="81.5" rx="0" fill="#e8e8e0" stroke="none" stroke-width="1" />
<rect x="828.9" y="518" width="1" height="81.5" rx="0" fill="#a4a49a" stroke="none" stroke-width="1" />
<rect x="830.8" y="518" width="1.1" height="81.5" rx="0" fill="#4a4a44" stroke="none" stroke-width="1" />
<rect x="831.9" y="518" width="3" height="81.5" rx="0" fill="#7e7e70" stroke="none" stroke-width="1" />
<rect x="834.9" y="518" width="2" height="81.5" rx="0" fill="#e8e8e0" stroke="none" stroke-width="1" />
<rect x="836.9" y="518" width="1" height="81.5" rx="0" fill="#a4a49a" stroke="none" stroke-width="1" />
<rect x="838.7" y="518" width="1.1" height="81.5" rx="0" fill="#4a4a44" stroke="none" stroke-width="1" />
<rect x="839.8" y="518" width="3" height="81.5" rx="0" fill="#7e7e70" stroke="none" stroke-width="1" />
<rect x="842.8" y="518" width="2" height="81.5" rx="0" fill="#e8e8e0" stroke="none" stroke-width="1" />
<rect x="844.8" y="518" width="1" height="81.5" rx="0" fill="#a4a49a" stroke="none" stroke-width="1" />
<rect x="846.7" y="518" width="1.1" height="81.5" rx="0" fill="#4a4a44" stroke="none" stroke-width="1" />
<rect x="847.8" y="518" width="3" height="81.5" rx="0" fill="#7e7e70" stroke="none" stroke-width="1" />
<rect x="850.8" y="518" width="2" height="81.5" rx="0" fill="#e8e8e0" stroke="none" stroke-width="1" />
<rect x="852.8" y="518" width="1" height="81.5" rx="0" fill="#a4a49a" stroke="none" stroke-width="1" />
<rect x="854.6" y="518" width="1.1" height="81.5" rx="0" fill="#4a4a44" stroke="none" stroke-width="1" />
<rect x="855.7" y="518" width="3" height="81.5" rx="0" fill="#7e7e70" stroke="none" stroke-width="1" />
<rect x="858.7" y="518" width="2" height="81.5" rx="0" fill="#e8e8e0" stroke="none" stroke-width="1" />
<rect x="860.7" y="518" width="1" height="81.5" rx="0" fill="#a4a49a" stroke="none" stroke-width="1" />
<rect x="759.5" y="516" width="5" height="2.4" rx="0" fill="#222" stroke="none" stroke-width="1" />
<rect x="759.5" y="599.1" width="5" height="2.4" rx="0" fill="#222" stroke="none" stroke-width="1" />
<rect x="783.4" y="516" width="5" height="2.4" rx="0" fill="#222" stroke="none" stroke-width="1" />
<rect x="783.4" y="599.1" width="5" height="2.4" rx="0" fill="#222" stroke="none" stroke-width="1" />
<rect x="807.3" y="516" width="5" height="2.4" rx="0" fill="#222" stroke="none" stroke-width="1" />
<rect x="807.3" y="599.1" width="5" height="2.4" rx="0" fill="#222" stroke="none" stroke-width="1" />
<rect x="831.2" y="516" width="5" height="2.4" rx="0" fill="#222" stroke="none" stroke-width="1" />
<rect x="831.2" y="599.1" width="5" height="2.4" rx="0" fill="#222" stroke="none" stroke-width="1" />
<rect x="855" y="516" width="5" height="2.4" rx="0" fill="#222" stroke="none" stroke-width="1" />
<rect x="855" y="599.1" width="5" height="2.4" rx="0" fill="#222" stroke="none" stroke-width="1" />
<rect x="758.5" y="607" width="105.5" height="85" rx="0" fill="#adada0" stroke="#333" stroke-width="1.2" />
<rect x="761.1" y="609" width="1.1" height="81" rx="0" fill="#4a4a44" stroke="none" stroke-width="1" />
<rect x="762.2" y="609" width="3" height="81" rx="0" fill="#7e7e70" stroke="none" stroke-width="1" />
<rect x="765.2" y="609" width="2" height="81" rx="0" fill="#e8e8e0" stroke="none" stroke-width="1" />
<rect x="767.2" y="609" width="1" height="81" rx="0" fill="#a4a49a" stroke="none" stroke-width="1" />
<rect x="768.9" y="609" width="1.1" height="81" rx="0" fill="#4a4a44" stroke="none" stroke-width="1" />
<rect x="770" y="609" width="3" height="81" rx="0" fill="#7e7e70" stroke="none" stroke-width="1" />
<rect x="773" y="609" width="2" height="81" rx="0" fill="#e8e8e0" stroke="none" stroke-width="1" />
<rect x="775" y="609" width="1" height="81" rx="0" fill="#a4a49a" stroke="none" stroke-width="1" />
<rect x="776.7" y="609" width="1.1" height="81" rx="0" fill="#4a4a44" stroke="none" stroke-width="1" />
<rect x="777.8" y="609" width="3" height="81" rx="0" fill="#7e7e70" stroke="none" stroke-width="1" />
<rect x="780.8" y="609" width="2" height="81" rx="0" fill="#e8e8e0" stroke="none" stroke-width="1" />
<rect x="782.8" y="609" width="1" height="81" rx="0" fill="#a4a49a" stroke="none" stroke-width="1" />
<rect x="784.5" y="609" width="1.1" height="81" rx="0" fill="#4a4a44" stroke="none" stroke-width="1" />
<rect x="785.6" y="609" width="3" height="81" rx="0" fill="#7e7e70" stroke="none" stroke-width="1" />
<rect x="788.6" y="609" width="2" height="81" rx="0" fill="#e8e8e0" stroke="none" stroke-width="1" />
<rect x="790.6" y="609" width="1" height="81" rx="0" fill="#a4a49a" stroke="none" stroke-width="1" />
<rect x="792.3" y="609" width="1.1" height="81" rx="0" fill="#4a4a44" stroke="none" stroke-width="1" />
<rect x="793.4" y="609" width="3" height="81" rx="0" fill="#7e7e70" stroke="none" stroke-width="1" />
<rect x="796.4" y="609" width="2" height="81" rx="0" fill="#e8e8e0" stroke="none" stroke-width="1" />
<rect x="798.4" y="609" width="1" height="81" rx="0" fill="#a4a49a" stroke="none" stroke-width="1" />
<rect x="800.1" y="609" width="1.1" height="81" rx="0" fill="#4a4a44" stroke="none" stroke-width="1" />
<rect x="801.2" y="609" width="3" height="81" rx="0" fill="#7e7e70" stroke="none" stroke-width="1" />
<rect x="804.2" y="609" width="2" height="81" rx="0" fill="#e8e8e0" stroke="none" stroke-width="1" />
<rect x="806.2" y="609" width="1" height="81" rx="0" fill="#a4a49a" stroke="none" stroke-width="1" />
<rect x="807.9" y="609" width="1.1" height="81" rx="0" fill="#4a4a44" stroke="none" stroke-width="1" />
<rect x="809" y="609" width="3" height="81" rx="0" fill="#7e7e70" stroke="none" stroke-width="1" />
<rect x="812" y="609" width="2" height="81" rx="0" fill="#e8e8e0" stroke="none" stroke-width="1" />
<rect x="814" y="609" width="1" height="81" rx="0" fill="#a4a49a" stroke="none" stroke-width="1" />
<rect x="815.8" y="609" width="1.1" height="81" rx="0" fill="#4a4a44" stroke="none" stroke-width="1" />
<rect x="816.9" y="609" width="3" height="81" rx="0" fill="#7e7e70" stroke="none" stroke-width="1" />
<rect x="819.9" y="609" width="2" height="81" rx="0" fill="#e8e8e0" stroke="none" stroke-width="1" />
<rect x="821.9" y="609" width="1" height="81" rx="0" fill="#a4a49a" stroke="none" stroke-width="1" />
<rect x="823.6" y="609" width="1.1" height="81" rx="0" fill="#4a4a44" stroke="none" stroke-width="1" />
<rect x="824.7" y="609" width="3" height="81" rx="0" fill="#7e7e70" stroke="none" stroke-width="1" />
<rect x="827.7" y="609" width="2" height="81" rx="0" fill="#e8e8e0" stroke="none" stroke-width="1" />
<rect x="829.7" y="609" width="1" height="81" rx="0" fill="#a4a49a" stroke="none" stroke-width="1" />
<rect x="831.4" y="609" width="1.1" height="81" rx="0" fill="#4a4a44" stroke="none" stroke-width="1" />
<rect x="832.5" y="609" width="3" height="81" rx="0" fill="#7e7e70" stroke="none" stroke-width="1" />
<rect x="835.5" y="609" width="2" height="81" rx="0" fill="#e8e8e0" stroke="none" stroke-width="1" />
<rect x="837.5" y="609" width="1" height="81" rx="0" fill="#a4a49a" stroke="none" stroke-width="1" />
<rect x="839.2" y="609" width="1.1" height="81" rx="0" fill="#4a4a44" stroke="none" stroke-width="1" />
<rect x="840.3" y="609" width="3" height="81" rx="0" fill="#7e7e70" stroke="none" stroke-width="1" />
<rect x="843.3" y="609" width="2" height="81" rx="0" fill="#e8e8e0" stroke="none" stroke-width="1" />
<rect x="845.3" y="609" width="1" height="81" rx="0" fill="#a4a49a" stroke="none" stroke-width="1" />
<rect x="847" y="609" width="1.1" height="81" rx="0" fill="#4a4a44" stroke="none" stroke-width="1" />
<rect x="848.1" y="609" width="3" height="81" rx="0" fill="#7e7e70" stroke="none" stroke-width="1" />
<rect x="851.1" y="609" width="2" height="81" rx="0" fill="#e8e8e0" stroke="none" stroke-width="1" />
<rect x="853.1" y="609" width="1" height="81" rx="0" fill="#a4a49a" stroke="none" stroke-width="1" />
<rect x="854.8" y="609" width="1.1" height="81" rx="0" fill="#4a4a44" stroke="none" stroke-width="1" />
<rect x="855.9" y="609" width="3" height="81" rx="0" fill="#7e7e70" stroke="none" stroke-width="1" />
<rect x="858.9" y="609" width="2" height="81" rx="0" fill="#e8e8e0" stroke="none" stroke-width="1" />
<rect x="860.9" y="609" width="1" height="81" rx="0" fill="#a4a49a" stroke="none" stroke-width="1" />
<rect x="761.5" y="607" width="5" height="2.4" rx="0" fill="#222" stroke="none" stroke-width="1" />
<rect x="761.5" y="689.6" width="5" height="2.4" rx="0" fill="#222" stroke="none" stroke-width="1" />
<rect x="784.9" y="607" width="5" height="2.4" rx="0" fill="#222" stroke="none" stroke-width="1" />
<rect x="784.9" y="689.6" width="5" height="2.4" rx="0" fill="#222" stroke="none" stroke-width="1" />
<rect x="808.3" y="607" width="5" height="2.4" rx="0" fill="#222" stroke="none" stroke-width="1" />
<rect x="808.3" y="689.6" width="5" height="2.4" rx="0" fill="#222" stroke="none" stroke-width="1" />
<rect x="831.8" y="607" width="5" height="2.4" rx="0" fill="#222" stroke="none" stroke-width="1" />
<rect x="831.8" y="689.6" width="5" height="2.4" rx="0" fill="#222" stroke="none" stroke-width="1" />
<rect x="855.2" y="607" width="5" height="2.4" rx="0" fill="#222" stroke="none" stroke-width="1" />
<rect x="855.2" y="689.6" width="5" height="2.4" rx="0" fill="#222" stroke="none" stroke-width="1" />
<line x1="646" y1="696.5" x2="762" y2="696.5" stroke="#555" stroke-width="1.6" />
<rect x="655" y="693.5" width="42" height="3.5" rx="0" fill="none" stroke="#666" stroke-width="0.9" />
<rect x="700" y="693.5" width="22" height="3.5" rx="0" fill="none" stroke="#666" stroke-width="0.9" />
<polyline points="759,692 759,697.5 838,697.5" fill="none" stroke="#333" stroke-width="1.6" />
<rect x="769.5" y="693" width="3" height="4" rx="0" fill="none" stroke="#444" stroke-width="0.8" />
<rect x="800.5" y="693" width="3" height="4" rx="0" fill="none" stroke="#444" stroke-width="0.8" />
<rect x="831.5" y="693" width="3" height="4" rx="0" fill="none" stroke="#444" stroke-width="0.8" />
<circle cx="713.3" cy="745.7" r="40.8" fill="none" stroke="#4a4a4a" stroke-width="1.5" />
<circle cx="713.3" cy="745.7" r="36.6" fill="none" stroke="#4a4a4a" stroke-width="1.2" />
<circle cx="713.3" cy="745.7" r="38.7" fill="none" stroke="#e2e2e2" stroke-width="2.4" />
<rect x="656.1" y="707.8" width="25" height="11" rx="2" fill="#fff" stroke="#333" stroke-width="1" transform="rotate(-57 668.6 713.3)"/>
<rect x="659.1" y="710.3" width="19" height="6" rx="2" fill="none" stroke="#c4c4c4" stroke-width="0.8" transform="rotate(-57 668.6 713.3)"/>
<rect x="690.7" y="705" width="11" height="19" rx="2" fill="#fff" stroke="#333" stroke-width="1" transform="rotate(-22 696.2 714.5)"/>
<rect x="657" y="774.5" width="25" height="11" rx="2" fill="#fff" stroke="#333" stroke-width="1" transform="rotate(57 669.5 780)"/>
<rect x="660" y="777" width="19" height="6" rx="2" fill="none" stroke="#c4c4c4" stroke-width="0.8" transform="rotate(57 669.5 780)"/>
<rect x="695.5" y="788.6" width="26.5" height="11.4" rx="2" fill="#fff" stroke="#333" stroke-width="1.2" />
<rect x="698" y="791" width="21.5" height="6" rx="0" fill="none" stroke="#c4c4c4" stroke-width="0.8" />
<path d="M640 729l6-2.500 7 12v16l-7 11-6-2.500z" fill="#fff" stroke="#333" stroke-width="1.3" />
<rect x="659" y="732" width="9.6" height="25" rx="1" fill="none" stroke="#555" stroke-width="1.1" />
<rect x="661" y="736" width="5.6" height="17" rx="0" fill="none" stroke="#999" stroke-width="0.9" />
<rect x="656" y="726" width="12" height="4.5" rx="0" fill="none" stroke="#444" stroke-width="1" />
<rect x="654" y="759" width="14" height="5" rx="0" fill="none" stroke="#444" stroke-width="1" />
<circle cx="642" cy="747.5" r="1.6" fill="none" stroke="#333" stroke-width="1" />
<line x1="620" y1="770" x2="634" y2="765" stroke="#333" stroke-width="2" />
<path d="M824 703Q804 704 804 724V756Q805 777 826 777.500H846Q868 777 868 756V724Q868 703 846 702.500Z" fill="none" stroke="#6a6a6a" stroke-width="1.3" />
<path d="M825 706Q807 707 807 725V755Q808 774 827 774.500H845Q865 774 865 755V725Q865 706 845 705.500Z" fill="none" stroke="#b0b0b0" stroke-width="1" />
<rect x="824.8" y="726.7" width="17.2" height="25.7" rx="6" fill="none" stroke="#c8c8c8" stroke-width="1.2" />
<circle cx="858" cy="739" r="2.4" fill="none" stroke="#999" stroke-width="1" />
<rect x="778" y="726.7" width="23" height="26.6" rx="2" fill="none" stroke="#444" stroke-width="1.4" />
<rect x="782" y="730" width="15" height="20" rx="1" fill="none" stroke="#888" stroke-width="1" />
<rect x="795" y="717.5" width="13.6" height="5.5" rx="1" fill="none" stroke="#444" stroke-width="1.1" />
<rect x="795" y="756" width="13.6" height="5.5" rx="1" fill="none" stroke="#444" stroke-width="1.1" />
<line x1="801.5" y1="723" x2="801.5" y2="756" stroke="#666" stroke-width="1" />
<rect x="780.5" y="771.2" width="26" height="10.5" rx="2" fill="#fff" stroke="#333" stroke-width="1" transform="rotate(40 793.5 776.5)"/>
<rect x="783.5" y="773.8" width="20" height="5.5" rx="2" fill="none" stroke="#c4c4c4" stroke-width="0.8" transform="rotate(40 793.5 776.5)"/>
</g>
<!-- ring -->
<g id="ring">
<polyline points="874,526 944,480.5" fill="none" stroke="#444" stroke-width="1.2" />
<polyline points="862,543 874,535" fill="none" stroke="#444" stroke-width="1" />
<polyline points="941.7,496.2 951,492.4 960.5,489.1 970.2,486.3 980.1,484.1 990,482.3 1000.1,481.1" fill="none" stroke="#555" stroke-width="1.1" />
<polyline points="912,515.2 919.4,510.3 927,505.7 934.9,501.5 943,497.7 951.3,494.3 959.8,491.3 968.5,488.8 977.3,486.6 986.2,484.8 995.2,483.5 1004.3,482.6 1013.4,482.2 1022.6,482.1 1031.7,482.6 1040.8,483.4 1049.8,484.7 1058.7,486.4 1067.6,488.5 1076.2,491.1 1084.8,494.1 1093.1,497.4 1101.2,501.2 1109.1,505.3 1116.8,509.9 1124.2,514.7 1131.2,519.9 1138,525.5 1144.4,531.4 1150.5,537.5 1156.2,544 1161.5,550.7 1166.4,557.6 1170.9,564.8 1175,572.2 1178.7,579.7 1181.8,587.5 1184.6,595.3 1186.9,603.3 1188.7,611.4 1190,619.6 1190.8,627.8 1191.2,636 1191.1,644.3 1190.5,652.5 1189.4,660.7 1187.8,668.8 1185.8,676.8 1183.3,684.8 1180.3,692.6 1176.9,700.2 1173,707.7 1168.8,715 1164,722.1 1158.9,728.9 1153.4,735.5 1147.5,741.8 1141.3,747.8 1134.7,753.5 1127.8,758.9 1120.5,763.9 1113,768.6 1105.3,773 1097.2,776.9 1089,780.5 1080.6,783.7 1072,786.4 1063.2,788.8 1054.3,790.7" fill="none" stroke="#2c2c2c" stroke-width="1.7" />
<polyline points="989.4,489.7 998.1,488.5 1006.9,487.8 1015.6,487.4 1024.4,487.5 1033.2,488 1041.9,488.9 1050.6,490.2 1059.2,492 1067.6,494.1 1076,496.6 1084.1,499.6 1092.1,502.9 1099.9,506.6 1107.4,510.6 1114.7,515 1121.8,519.8 1128.5,524.9 1135,530.3 1141.1,535.9 1146.9,541.9 1152.3,548.2 1157.4,554.6 1162.1,561.4 1166.3,568.3 1170.2,575.4 1173.6,582.7 1176.7,590.2 1179.2,597.8 1181.4,605.5 1183,613.2 1184.3,621.1 1185,629 1185.3,636.9 1185.2,644.9 1184.5,652.8 1183.4,660.7 1181.9,668.5 1179.9,676.2 1177.5,683.8 1174.6,691.3 1171.3,698.7 1167.5,705.8 1163.4,712.8 1158.8,719.6 1153.9,726.2 1148.5,732.5 1142.8,738.5 1136.8,744.3 1130.5,749.8 1123.8,755 1116.8,759.8 1109.6,764.3 1102.1,768.5 1094.4,772.3 1086.5,775.7 1078.4,778.7 1070.1,781.4 1061.7,783.6 1053.1,785.5" fill="none" stroke="#555" stroke-width="1.1" />
<polyline points="988.9,487.2 997.8,486 1006.7,485.3 1015.6,484.9 1024.5,485 1033.4,485.5 1042.3,486.4 1051.1,487.8 1059.8,489.5 1068.4,491.7 1076.9,494.3 1085.2,497.3 1093.3,500.7 1101.2,504.4 1108.9,508.5 1116.3,513 1123.5,517.8 1130.4,523 1136.9,528.5 1143.2,534.3 1149,540.3 1154.6,546.7 1159.7,553.3 1164.4,560.1 1168.8,567.1 1172.7,574.4 1176.2,581.8 1179.3,589.4 1181.9,597.1 1184.1,604.9 1185.8,612.8 1187,620.8 1187.8,628.9 1188.1,636.9 1187.9,645 1187.3,653 1186.2,661 1184.6,669 1182.6,676.8 1180.1,684.6 1177.2,692.2 1173.8,699.7 1170,707 1165.8,714.1 1161.1,721 1156.1,727.6 1150.7,734 1144.9,740.2 1138.8,746.1 1132.3,751.6 1125.5,756.9 1118.5,761.8 1111.1,766.4 1103.5,770.6 1095.7,774.5 1087.6,778 1079.4,781.1 1070.9,783.8 1062.4,786.1 1053.7,787.9" fill="none" stroke="#dcdcdc" stroke-width="2" />
<polyline points="1054.9,515.3 1061.9,517.2 1068.9,519.4 1075.7,522 1082.3,524.8 1088.8,528 1095.1,531.5 1101.2,535.2 1107,539.3 1112.6,543.6 1118,548.2 1123.1,553 1127.8,558.1 1132.3,563.4 1136.5,568.9 1140.4,574.5 1143.9,580.4 1147.1,586.4 1149.9,592.5 1152.3,598.8 1154.4,605.2 1156.2,611.7 1157.5,618.2 1158.5,624.8 1159,631.4 1159.2,638.1 1159,644.8 1158.5,651.4 1157.5,658 1156.2,664.5 1154.4,671 1152.3,677.4 1149.9,683.7 1147.1,689.8 1143.9,695.8 1140.4,701.7 1136.5,707.3 1132.3,712.8 1127.8,718.1 1123.1,723.2 1118,728 1112.6,732.6 1107,736.9 1101.2,741 1095.1,744.7 1088.8,748.2 1082.3,751.4 1075.7,754.2 1068.9,756.8 1061.9,759 1054.9,760.9" fill="none" stroke="#555" stroke-width="1.3" />
<polyline points="1053.7,519.1 1060.6,520.9 1067.3,523 1073.9,525.5 1080.4,528.3 1086.7,531.4 1092.7,534.7 1098.6,538.4 1104.3,542.3 1109.7,546.5 1114.9,551 1119.8,555.6 1124.5,560.5 1128.8,565.7 1132.9,571 1136.6,576.5 1140,582.2 1143.1,588 1145.8,593.9 1148.2,600 1150.3,606.2 1151.9,612.5 1153.2,618.8 1154.2,625.2 1154.7,631.7 1154.9,638.1 1154.7,644.5 1154.2,651 1153.2,657.4 1151.9,663.7 1150.3,670 1148.2,676.2 1145.8,682.3 1143.1,688.2 1140,694 1136.6,699.7 1132.9,705.2 1128.8,710.5 1124.5,715.7 1119.8,720.6 1114.9,725.2 1109.7,729.7 1104.3,733.9 1098.6,737.8 1092.7,741.5 1086.7,744.8 1080.4,747.9 1073.9,750.7 1067.3,753.2 1060.6,755.3 1053.7,757.1" fill="none" stroke="#999" stroke-width="1" />
<polyline points="1078.9,543.5 1084.4,546.6 1089.7,549.9 1094.8,553.4 1099.7,557.2 1104.3,561.2 1108.7,565.5 1112.9,569.9 1116.8,574.5 1120.4,579.3 1123.7,584.3 1126.7,589.5 1129.4,594.7 1131.8,600.1 1133.9,605.6 1135.6,611.2 1137.1,616.9 1138.1,622.6 1138.9,628.4 1139.3,634.2 1139.3,640 1139.1,645.8 1138.4,651.6 1137.5,657.3 1136.2,663 1134.5,668.7 1132.6,674.2 1130.3,679.6 1127.7,684.9 1124.8,690.1 1121.5,695.2 1118,700 1114.2,704.7 1110.2,709.2 1105.9,713.5 1101.3,717.6 1096.5,721.5 1091.4,725.1 1086.2,728.5 1080.8,731.7 1075.2,734.5" fill="none" stroke="#cfcfd6" stroke-width="1.2" />
<polyline points="1063.3,526.7 1070.1,529.1 1076.7,531.9 1083.2,535 1089.4,538.4 1095.4,542.1 1101.2,546.1 1106.7,550.4 1112,554.9 1117,559.8 1121.6,564.8 1126,570.1" fill="none" stroke="#777" stroke-width="1" />
<line x1="1154" y1="593.5" x2="1162.1" y2="590.9" stroke="#333" stroke-width="1" />
<line x1="1162.1" y1="590.9" x2="1165.4" y2="589.8" stroke="#333" stroke-width="2.6" stroke-linecap="round"/>
<line x1="1161.6" y1="622.2" x2="1170.2" y2="621.3" stroke="#333" stroke-width="1" />
<line x1="1170.2" y1="621.3" x2="1173.6" y2="620.9" stroke="#333" stroke-width="2.6" stroke-linecap="round"/>
<line x1="1162.7" y1="639.2" x2="1171.3" y2="639.3" stroke="#333" stroke-width="1" />
<line x1="1171.3" y1="639.3" x2="1174.8" y2="639.3" stroke="#333" stroke-width="2.6" stroke-linecap="round"/>
<line x1="1162.3" y1="647.2" x2="1171" y2="647.7" stroke="#333" stroke-width="1" />
<line x1="1171" y1="647.7" x2="1174.4" y2="647.9" stroke="#333" stroke-width="2.6" stroke-linecap="round"/>
<line x1="1159" y1="667.4" x2="1167.4" y2="669.2" stroke="#333" stroke-width="1" />
<line x1="1167.4" y1="669.2" x2="1170.8" y2="669.9" stroke="#333" stroke-width="2.6" stroke-linecap="round"/>
<line x1="1151.2" y1="689" x2="1159.2" y2="692" stroke="#333" stroke-width="1" />
<line x1="1159.2" y1="692" x2="1162.4" y2="693.3" stroke="#333" stroke-width="2.6" stroke-linecap="round"/>
<line x1="1139.4" y1="709" x2="1146.7" y2="713.3" stroke="#333" stroke-width="1" />
<line x1="1146.7" y1="713.3" x2="1149.6" y2="715" stroke="#333" stroke-width="2.6" stroke-linecap="round"/>
<line x1="1094.7" y1="534" x2="1111.9" y2="510.6" stroke="#888" stroke-width="2" stroke-dasharray="5 2"/>
<line x1="1097.7" y1="740.3" x2="1115" y2="762.7" stroke="#888" stroke-width="2" stroke-dasharray="5 2"/>
<rect x="993.5" y="485.1" width="29" height="10.5" rx="2" fill="#fff" stroke="#9a9a9a" stroke-width="1.1" transform="rotate(4 1008 490.3)"/>
<rect x="995" y="484.1" width="5" height="10.5" rx="2" fill="#fff" stroke="#777" stroke-width="1" transform="rotate(4 997.5 489.3)"/>
<rect x="1025.5" y="488.2" width="29" height="10.5" rx="2" fill="#fff" stroke="#9a9a9a" stroke-width="1.1" transform="rotate(10 1040 493.5)"/>
<rect x="1027" y="487.2" width="5" height="10.5" rx="2" fill="#fff" stroke="#777" stroke-width="1" transform="rotate(10 1029.5 492.5)"/>
<rect x="1057.5" y="493.2" width="35" height="10.5" rx="2" fill="#fff" stroke="#9a9a9a" stroke-width="1.1" transform="rotate(15 1075 498.5)"/>
<rect x="1059" y="492.2" width="5" height="10.5" rx="2" fill="#fff" stroke="#777" stroke-width="1" transform="rotate(15 1061.5 497.5)"/>
<line x1="1021" y1="485" x2="1023" y2="497" stroke="#444" stroke-width="1.5" />
<line x1="1054" y1="488" x2="1056" y2="502" stroke="#444" stroke-width="1.5" />
<rect x="1082" y="773" width="14" height="9" rx="1.5" fill="#fff" stroke="#888" stroke-width="1" transform="rotate(-18 1089 777.5)"/>
<rect x="1062" y="781.5" width="12" height="9" rx="1.5" fill="#fff" stroke="#888" stroke-width="1" transform="rotate(-12 1068 786)"/>
<polyline points="1090,504 1106,522 1124,535 1131,531" fill="none" stroke="#333" stroke-width="1.2" />
<polyline points="1093,510 1119,541 1133,559" fill="none" stroke="#333" stroke-width="1.2" />
<circle cx="1138.6" cy="537.5" r="7.5" fill="#fff" stroke="#555" stroke-width="1.2" />
<circle cx="1138.6" cy="537.5" r="4" fill="none" stroke="#c4c4c4" stroke-width="0.8" />
<circle cx="1137.5" cy="556.8" r="4.8" fill="#fff" stroke="#555" stroke-width="1.2" />
<path d="M1131 531l8-5 8 10-2 22-5 4" fill="none" stroke="#444" stroke-width="1.1" />
<circle cx="1110" cy="535.5" r="2" fill="none" stroke="#333" stroke-width="1" />
<polyline points="1078,773 1100,757 1127,738" fill="none" stroke="#222" stroke-width="1.5" />
<circle cx="1129.5" cy="734.5" r="2.6" fill="none" stroke="#222" stroke-width="1.4" />
<rect x="1119" y="707.5" width="3" height="3" rx="0" fill="#222" stroke="none" stroke-width="1" />
<rect x="1125" y="552" width="2" height="2" rx="0" fill="#333" stroke="none" stroke-width="1" />
<rect x="1128.6" y="633" width="20" height="26" rx="0" fill="#fff" stroke="#777" stroke-width="1" />
<rect x="1148" y="632" width="8" height="28" rx="0" fill="#ddd" stroke="#777" stroke-width="1" />
<line x1="1152" y1="632" x2="1152" y2="660" stroke="#999" stroke-width="1" />
</g>
<!-- rear -->
<g id="rear">
<line x1="1184.5" y1="501" x2="1187.6" y2="778" stroke="#a0a0a0" stroke-width="1.3" />
<polyline points="1100,494 1184,501 1390,521" fill="none" stroke="#dedede" stroke-width="1" />
<rect x="1155" y="516.2" width="26" height="11.5" rx="2.5" fill="#fff" stroke="#2c2c2c" stroke-width="1.4" transform="rotate(-33 1168 522)"/>
<rect x="1158" y="519" width="20" height="6" rx="1" fill="none" stroke="#c4c4c4" stroke-width="0.8" transform="rotate(-33 1168 522)"/>
<rect x="1236.5" y="515.8" width="26" height="11.5" rx="2.5" fill="#fff" stroke="#2c2c2c" stroke-width="1.4" transform="rotate(-28 1249.5 521.5)"/>
<rect x="1239.5" y="518.5" width="20" height="6" rx="1" fill="none" stroke="#c4c4c4" stroke-width="0.8" transform="rotate(-28 1249.5 521.5)"/>
<rect x="1275" y="515.8" width="26" height="11.5" rx="2.5" fill="#fff" stroke="#2c2c2c" stroke-width="1.4" transform="rotate(-28 1288 521.5)"/>
<rect x="1278" y="518.5" width="20" height="6" rx="1" fill="none" stroke="#c4c4c4" stroke-width="0.8" transform="rotate(-28 1288 521.5)"/>
<rect x="1155.6" y="749.2" width="26" height="11.5" rx="2.5" fill="#fff" stroke="#2c2c2c" stroke-width="1.4" transform="rotate(30 1168.6 755)"/>
<rect x="1158.6" y="752" width="20" height="6" rx="1" fill="none" stroke="#c4c4c4" stroke-width="0.8" transform="rotate(30 1168.6 755)"/>
<rect x="1224" y="746.6" width="26" height="11.5" rx="2.5" fill="#fff" stroke="#2c2c2c" stroke-width="1.4" transform="rotate(28 1237 752.4)"/>
<rect x="1227" y="749.4" width="20" height="6" rx="1" fill="none" stroke="#c4c4c4" stroke-width="0.8" transform="rotate(28 1237 752.4)"/>
<rect x="1268" y="745.2" width="26" height="11.5" rx="2.5" fill="#fff" stroke="#2c2c2c" stroke-width="1.4" transform="rotate(28 1281 751)"/>
<rect x="1271" y="748" width="20" height="6" rx="1" fill="none" stroke="#c4c4c4" stroke-width="0.8" transform="rotate(28 1281 751)"/>
<line x1="1167" y1="534" x2="1175" y2="537" stroke="#333" stroke-width="1.6" />
<line x1="1170" y1="737" x2="1181" y2="736" stroke="#333" stroke-width="1.2" />
<path d="M1263.4 547.6H1368Q1380 547.6 1380 559.6V595.7Q1380 625.7 1350 625.7H1281.4Q1251.4 625.7 1251.4 595.7V559.6Q1251.4 547.6 1263.4 547.6Z" fill="#fff" stroke="#333" stroke-width="1.4" />
<path d="M1263.9 551.1H1367.5Q1376.5 551.1 1376.5 560.1V595.2Q1376.5 622.2 1349.5 622.2H1281.9Q1254.9 622.2 1254.9 595.2V560.1Q1254.9 551.1 1263.9 551.1Z" fill="none" stroke="#8a8a8a" stroke-width="1" />
<path d="M1264.9 554.1H1366.5Q1373.5 554.1 1373.5 561.1V594.2Q1373.5 619.2 1348.5 619.2H1282.9Q1257.9 619.2 1257.9 594.2V561.1Q1257.9 554.1 1264.9 554.1Z" fill="none" stroke="#dedede" stroke-width="1" />
<path d="M1283 643H1352Q1382 643 1382 673V712Q1382 724 1370 724H1265Q1253 724 1253 712V673Q1253 643 1283 643Z" fill="#fff" stroke="#333" stroke-width="1.4" />
<path d="M1283.5 646.5H1351.5Q1378.5 646.5 1378.5 673.5V711.5Q1378.5 720.5 1369.5 720.5H1265.5Q1256.5 720.5 1256.5 711.5V673.5Q1256.5 646.5 1283.5 646.5Z" fill="none" stroke="#8a8a8a" stroke-width="1" />
<path d="M1284.5 649.5H1350.5Q1375.5 649.5 1375.5 674.5V710.5Q1375.5 717.5 1368.5 717.5H1266.5Q1259.5 717.5 1259.5 710.5V674.5Q1259.5 649.5 1284.5 649.5Z" fill="none" stroke="#dedede" stroke-width="1" />
<rect x="1271" y="563" width="90" height="45.6" rx="14" fill="none" stroke="#d0d0d0" stroke-width="1.2" />
<rect x="1273" y="662" width="89" height="44.7" rx="14" fill="none" stroke="#d0d0d0" stroke-width="1.2" />
<rect x="1292" y="619" width="11" height="10.5" rx="0" fill="#fff" stroke="#333" stroke-width="1.2" />
<rect x="1292" y="640" width="11" height="10.5" rx="0" fill="#fff" stroke="#333" stroke-width="1.2" />
<rect x="1333" y="619" width="7" height="10.5" rx="0" fill="#fff" stroke="#333" stroke-width="1.2" />
<rect x="1333" y="640" width="7" height="10.5" rx="0" fill="#fff" stroke="#333" stroke-width="1.2" />
<line x1="1303" y1="626.7" x2="1333" y2="626.7" stroke="#555" stroke-width="1.4" />
<line x1="1303" y1="643" x2="1333" y2="643" stroke="#555" stroke-width="1.4" />
<line x1="1340" y1="626.7" x2="1390" y2="626.7" stroke="#aaa" stroke-width="1" />
<line x1="1340" y1="642" x2="1390" y2="642" stroke="#aaa" stroke-width="1" />
<rect x="1389.5" y="623" width="2.6" height="6.5" rx="0" fill="#222" stroke="none" stroke-width="1" />
<rect x="1390.5" y="639" width="2.6" height="7" rx="0" fill="#222" stroke="none" stroke-width="1" />
<circle cx="1314" cy="543.5" r="6.5" fill="#fff" stroke="#444" stroke-width="1.5" />
<circle cx="1314" cy="543.5" r="3.5" fill="none" stroke="#999" stroke-width="1" />
<rect x="1310" y="549" width="9" height="5" rx="0" fill="#fff" stroke="#333" stroke-width="1.1" />
<circle cx="1317" cy="725.5" r="6.5" fill="#fff" stroke="#444" stroke-width="1.5" />
<circle cx="1317" cy="725.5" r="3.5" fill="none" stroke="#999" stroke-width="1" />
<rect x="1312.5" y="715.5" width="9" height="5" rx="0" fill="#fff" stroke="#333" stroke-width="1.1" />
<path d="M1313 532l5-2.500H1385.700v5H1318z" fill="#fff" stroke="#555" stroke-width="1.1" />
<circle cx="1313.5" cy="532" r="2.2" fill="#333" stroke="#333" stroke-width="1" />
<rect x="1383" y="528.5" width="3" height="7.5" rx="0" fill="none" stroke="#333" stroke-width="1" />
<rect x="1377" y="538.5" width="5" height="4" rx="0" fill="none" stroke="#444" stroke-width="0.9" />
<path d="M1318 737l8-3H1388v7H1326z" fill="#fff" stroke="#444" stroke-width="1.2" />
<path d="M1318 732.500v9M1315 737h4" fill="none" stroke="#222" stroke-width="1.6" />
<rect x="1386" y="732" width="3" height="10.5" rx="1.5" fill="none" stroke="#333" stroke-width="1.1" />
<rect x="1379" y="725.7" width="5" height="4.8" rx="0" fill="none" stroke="#444" stroke-width="1" />
<rect x="1379" y="745" width="5" height="4.8" rx="0" fill="none" stroke="#444" stroke-width="1" />
<circle cx="1220" cy="636" r="22" fill="none" stroke="#8a8a8a" stroke-width="1.4" />
<circle cx="1220" cy="636" r="18" fill="none" stroke="#9a9a9a" stroke-width="1.2" />
<line x1="1202.5" y1="636" x2="1237.5" y2="636" stroke="#8a8a8a" stroke-width="2.2" />
<line x1="1202.5" y1="636" x2="1237.5" y2="636" stroke="#fff" stroke-width="0.8" />
<line x1="1211.2" y1="620.8" x2="1228.8" y2="651.2" stroke="#8a8a8a" stroke-width="2.2" />
<line x1="1211.2" y1="620.8" x2="1228.8" y2="651.2" stroke="#fff" stroke-width="0.8" />
<line x1="1228.8" y1="620.8" x2="1211.2" y2="651.2" stroke="#8a8a8a" stroke-width="2.2" />
<line x1="1228.8" y1="620.8" x2="1211.2" y2="651.2" stroke="#fff" stroke-width="0.8" />
<circle cx="1220" cy="636" r="2" fill="#fff" stroke="#777" stroke-width="1" />
<circle cx="1247.6" cy="658" r="10.2" fill="none" stroke="#3a3a3a" stroke-width="1.4" />
<circle cx="1247.6" cy="658" r="6" fill="none" stroke="#777" stroke-width="1.1" />
<circle cx="1247.6" cy="658" r="1.8" fill="none" stroke="#777" stroke-width="1" />
<rect x="1237" y="541" width="4" height="7.5" rx="0" fill="none" stroke="#333" stroke-width="1" />
<line x1="1233" y1="568" x2="1240" y2="565.5" stroke="#222" stroke-width="2" />
<line x1="1238" y1="698" x2="1244" y2="700.5" stroke="#222" stroke-width="2.2" />
<rect x="1224" y="725.7" width="2.7" height="7" rx="0" fill="none" stroke="#555" stroke-width="0.9" />
<rect x="1100" y="444.3" width="240" height="4.2" rx="2" fill="none" stroke="#dcdcdc" stroke-width="1.1" />
<rect x="1178" y="455.8" width="162" height="4.2" rx="2" fill="none" stroke="#dcdcdc" stroke-width="1.1" />
<rect x="1248.6" y="467" width="91.4" height="4.2" rx="2" fill="none" stroke="#dcdcdc" stroke-width="1.1" />
<rect x="1278" y="443" width="2.6" height="4" rx="0" fill="#333" stroke="none" stroke-width="1" />
<rect x="1278" y="460" width="2.6" height="4" rx="0" fill="#555" stroke="none" stroke-width="1" />
<rect x="1344.8" y="440" width="6.6" height="49.5" rx="0" fill="#e6e6e6" stroke="#9a9a9a" stroke-width="1" />
<line x1="1344.8" y1="456" x2="1351.4" y2="456" stroke="#555" stroke-width="1.6" />
<rect x="1344" y="437" width="8" height="3" rx="0" fill="#333" stroke="none" stroke-width="1" />
<rect x="1357" y="445" width="21" height="4.2" rx="2" fill="none" stroke="#d6d6d6" stroke-width="1.1" />
<rect x="1357" y="456.5" width="21" height="4.2" rx="2" fill="none" stroke="#d6d6d6" stroke-width="1.1" />
<rect x="1357" y="468" width="21" height="4.2" rx="2" fill="none" stroke="#d6d6d6" stroke-width="1.1" />
<rect x="1357" y="479" width="21" height="4.2" rx="2" fill="none" stroke="#d6d6d6" stroke-width="1.1" />
<rect x="1375" y="441" width="6" height="3" rx="0" fill="#555" stroke="none" stroke-width="1" />
<rect x="1179" y="477" width="18" height="14" rx="0" fill="none" stroke="#999" stroke-width="1.3" />
<line x1="1172.4" y1="474" x2="1172.4" y2="499" stroke="#777" stroke-width="1.1" />
<path d="M1114 471.500q-4 10-3 18l22 3.500v-19z" fill="#fff" stroke="#777" stroke-width="1.3" />
<line x1="1114" y1="476" x2="1133" y2="478" stroke="#c4c4c4" stroke-width="1" />
<path d="M1073 467h-3.500v11h3.500" fill="none" stroke="#555" stroke-width="1.5" />
<path d="M996 455q5 4 2 12l-3 1" fill="none" stroke="#666" stroke-width="1.6" />
<rect x="1323.5" y="497" width="7" height="15" rx="2" fill="none" stroke="#999" stroke-width="1.2" />
<path d="M1348 521v-14M1360 521l2-16 5-1 2 6 5 1 3 12M1389 506l3 14" fill="none" stroke="#888" stroke-width="1.2" />
<rect x="1250.5" y="814.5" width="94.3" height="4.2" rx="2" fill="none" stroke="#dcdcdc" stroke-width="1.1" />
<rect x="1183" y="826" width="161.8" height="4.2" rx="2" fill="none" stroke="#dcdcdc" stroke-width="1.1" />
<rect x="1120" y="836.5" width="224.8" height="4.2" rx="2" fill="none" stroke="#dcdcdc" stroke-width="1.1" />
<rect x="1282" y="822" width="2.6" height="4" rx="0" fill="#333" stroke="none" stroke-width="1" />
<rect x="1282" y="839.5" width="2.6" height="3.5" rx="0" fill="#555" stroke="none" stroke-width="1" />
<rect x="1348.6" y="796" width="6.6" height="49.7" rx="0" fill="#e6e6e6" stroke="#9a9a9a" stroke-width="1" />
<line x1="1348.6" y1="810" x2="1355.2" y2="810" stroke="#555" stroke-width="1.6" />
<rect x="1348" y="845" width="8" height="3" rx="0" fill="#333" stroke="none" stroke-width="1" />
<rect x="1360" y="803" width="21" height="4.2" rx="2" fill="none" stroke="#d6d6d6" stroke-width="1.1" />
<rect x="1360" y="814.5" width="21" height="4.2" rx="2" fill="none" stroke="#d6d6d6" stroke-width="1.1" />
<rect x="1360" y="826" width="21" height="4.2" rx="2" fill="none" stroke="#d6d6d6" stroke-width="1.1" />
<rect x="1360" y="836.5" width="21" height="4.2" rx="2" fill="none" stroke="#d6d6d6" stroke-width="1.1" />
<rect x="1380" y="841" width="6" height="3" rx="0" fill="#555" stroke="none" stroke-width="1" />
<rect x="1182" y="789.5" width="17.5" height="14" rx="0" fill="none" stroke="#999" stroke-width="1.3" />
<line x1="1174" y1="779" x2="1174" y2="807.6" stroke="#555" stroke-width="1.2" />
<path d="M1116 789q-4 10 3 22l19-3.500v-21z" fill="#fff" stroke="#777" stroke-width="1.3" />
<line x1="1119" y1="806" x2="1138" y2="803" stroke="#c4c4c4" stroke-width="1" />
<path d="M1078 802h-4v17h4" fill="none" stroke="#555" stroke-width="1.5" />
<path d="M1000 816q5 4 4 15l-4 1" fill="none" stroke="#666" stroke-width="1.6" />
<line x1="964.8" y1="803.8" x2="964.8" y2="836" stroke="#444" stroke-width="1.4" />
<line x1="976" y1="836" x2="976" y2="853" stroke="#222" stroke-width="1.8" />
<rect x="1325.7" y="763" width="6.7" height="18" rx="2" fill="none" stroke="#999" stroke-width="1.2" />
<path d="M1350 758v17M1362 757l2 17 5 2 3-8 5-1 1-10M1391 755l-3 20" fill="none" stroke="#888" stroke-width="1.2" />
<path d="M1022 846q2-9 14-11l28-2.500 1.500 12" fill="none" stroke="#999" stroke-width="1" />
<path d="M1161 822q4-6 14-7l30-3.500q6 1 5 4" fill="none" stroke="#aaa" stroke-width="1" />
<line x1="961" y1="454" x2="961" y2="477" stroke="#666" stroke-width="1.2" />
<line x1="972" y1="441" x2="972" y2="452" stroke="#333" stroke-width="1.6" />
<path d="M1017 444l42 6.500 1.500 4" fill="none" stroke="#999" stroke-width="1" />
</g>
<!-- turret -->
<g id="turret">
<rect x="832.5" y="559" width="18" height="7" rx="0" fill="#76763e" stroke="none" stroke-width="1" />
<rect x="832.5" y="565" width="18" height="24.5" rx="0" fill="#8e8e5c" stroke="none" stroke-width="1" />
<polygon points="980,494.3 1070.5,513.3 1127,595.5 1127,691.4 1074.3,775 982.9,797 893.3,769.5 838,687.6 838,600 850.5,581 892.4,523.8" fill="#454521" stroke="none" stroke-width="1" />
<polygon points="980,531 1044.8,543.8 1085.7,603.8 1084.8,673.3 1045.7,733.3 983.8,749.5 967.6,744.8 919,729.5 877,682 876,599 917,552.4" fill="none" stroke="#2f8f20" stroke-width="1.3" />
<line x1="876" y1="599" x2="838" y2="606" stroke="#2f8f20" stroke-width="1.2" />
<line x1="877" y1="682" x2="838" y2="688" stroke="#2f8f20" stroke-width="1.2" />
<line x1="1085.7" y1="603.8" x2="1127" y2="596" stroke="#2f8f20" stroke-width="1.6" />
<line x1="1084.8" y1="673.3" x2="1127" y2="691" stroke="#2f8f20" stroke-width="1.6" />
<line x1="980" y1="494.3" x2="980" y2="531" stroke="#9c9c70" stroke-width="0.8" />
<line x1="892.4" y1="523.8" x2="917" y2="552.4" stroke="#9c9c70" stroke-width="0.8" />
<line x1="1070.5" y1="513.3" x2="1044.8" y2="543.8" stroke="#9c9c70" stroke-width="0.8" />
<line x1="982.9" y1="797" x2="982.9" y2="753" stroke="#9c9c70" stroke-width="0.8" />
<line x1="893.3" y1="769.5" x2="951.4" y2="670.5" stroke="#9c9c70" stroke-width="0.8" />
<line x1="1074.3" y1="775" x2="976" y2="621" stroke="#9c9c70" stroke-width="0.8" />
<line x1="917" y1="553.5" x2="972" y2="549" stroke="#9c9c70" stroke-width="0.8" />
<line x1="972" y1="549" x2="1044.8" y2="544.5" stroke="#9c9c70" stroke-width="0.8" />
<line x1="919" y1="554" x2="949.5" y2="680" stroke="#9c9c70" stroke-width="0.8" />
<line x1="942" y1="594" x2="972" y2="655" stroke="#9c9c70" stroke-width="0.8" />
<line x1="944" y1="596" x2="1046" y2="734" stroke="#9c9c70" stroke-width="0.8" />
<line x1="962" y1="585.7" x2="1084.8" y2="672" stroke="#9c9c70" stroke-width="0.8" />
<line x1="976" y1="621" x2="1084.8" y2="672.8" stroke="#9c9c70" stroke-width="0.8" />
<line x1="948" y1="600" x2="1060" y2="752" stroke="#9c9c70" stroke-width="0.8" />
<line x1="951.4" y1="670.5" x2="919" y2="729.5" stroke="#9c9c70" stroke-width="0.8" />
<rect x="924.8" y="563" width="17.2" height="24.6" rx="0" fill="#8c8c60" stroke="none" stroke-width="1" />
<rect x="942" y="565" width="20" height="27" rx="0" fill="none" stroke="#2f8f20" stroke-width="1" />
<polyline points="917,552.4 942,565" fill="none" stroke="#2f8f20" stroke-width="0.9" />
<polyline points="972,549 962,565" fill="none" stroke="#2f8f20" stroke-width="0.9" />
<rect x="967.6" y="737" width="16.2" height="17" rx="0" fill="#8c8c60" stroke="none" stroke-width="1" />
<rect x="943" y="679" width="19" height="30.5" rx="0" fill="none" stroke="#2f8f20" stroke-width="0.9" />
<line x1="951.4" y1="670.5" x2="970.5" y2="655" stroke="#2f8f20" stroke-width="1.3" />
<line x1="962" y1="585.7" x2="976" y2="621" stroke="#2f8f20" stroke-width="0.9" />
<line x1="953" y1="722" x2="972" y2="736" stroke="#2f8f20" stroke-width="0.8" />
<line x1="958" y1="718" x2="975" y2="731" stroke="#2f8f20" stroke-width="0.8" />
<line x1="864" y1="566" x2="886" y2="566" stroke="#2c2c14" stroke-width="0.8" />
<line x1="862" y1="587" x2="872" y2="587" stroke="#2c2c14" stroke-width="0.8" />
<rect x="536" y="640.6" width="224" height="11.6" rx="0" fill="#242420" stroke="none" stroke-width="1" />
<rect x="758" y="638" width="104" height="18.5" rx="5" fill="#262622" stroke="none" stroke-width="1" />
<rect x="758" y="638" width="20" height="18.5" rx="0" fill="#262622" stroke="none" stroke-width="1" />
<line x1="540" y1="641.3" x2="858" y2="639.2" stroke="#3a3a36" stroke-width="1" />
<rect x="526.6" y="634.3" width="9.4" height="25" rx="0" fill="#d8705c" stroke="#3f8a22" stroke-width="1.2" />
<path d="M531 638l2 3-3 3 3 4-3 3 2 4" fill="none" stroke="#e8a090" stroke-width="1.2" />
<rect x="829" y="665" width="31" height="7.5" rx="3" fill="#2a2a1c" stroke="none" stroke-width="1" />
<line x1="824" y1="668.7" x2="832" y2="668.7" stroke="#2a2a1c" stroke-width="2" />
</g>
</svg>
<!--TANKEND-->
<!-- ===== taskbar ===== -->
<div id="task" class="abs">
 <div class="btn" style="left:2px;width:60px;top:3px;height:22px">
  <svg class="abs" style="left:2px;top:3px" width="18" height="16" viewBox="0 0 18 16">
   <path d="M2 2q3-2 6 0l-1 5q-3-2-6 0z" fill="#e8542a"/><path d="M9 2.5q3 2 6 0l-1 5q-3 2-6 0z" fill="#7cb83a"/>
   <path d="M1 8q3-2 6 0l-1 5q-3-2-6 0z" fill="#3a78d8"/><path d="M8 8.5q3 2 6 0l-1 5q-3 2-6 0z" fill="#f0c030"/>
  </svg>
  <span class="t" style="left:19.600px;top:1.700px;font:bold 17px 'Liberation Sans',sans-serif;letter-spacing:-.4px">Пуск</span>
 </div>
 <!-- quick launch -->
 <svg class="abs" style="left:70px;top:5px" width="95" height="22" viewBox="0 0 95 22">
  <rect x="3" y="5" width="16" height="9" fill="#3c7ad8"/><rect x="3" y="14" width="16" height="3.5" fill="#283848"/><rect x="4" y="14.5" width="3" height="2.5" fill="#9fd8c0"/>
  <circle cx="36" cy="11" r="8" fill="#f0a818" stroke="#3a2808" stroke-width="1.6"/><path d="M36 6l4 7h-8z" fill="none" stroke="#3a2808" stroke-width="1.6"/>
  <circle cx="61" cy="11" r="8.5" fill="#dfe6f4" stroke="#5a6aa8" stroke-width="1.2"/><circle cx="61" cy="11" r="5.5" fill="#2848c8"/><path d="M59 8l5 3-5 3z" fill="#fff"/>
  <path d="M55 17q6 4 12-1" stroke="#d89020" stroke-width="1.6" fill="none"/><path d="M66 5q3 4 1 9" stroke="#40a040" stroke-width="1.4" fill="none"/>
  <path d="M83 3l3 2.5-3 2.5M87 3l3 2.5-3 2.5" stroke="#000" stroke-width="1.3" fill="none"/>
 </svg>
 <div class="btn" style="left:166px"><svg class="abs" style="left:3px;top:1px" width="20" height="18" viewBox="0 0 20 18"><path d="M2 5l4-1 2-2 9 1-1 11-13 3z" fill="#3cc030" stroke="#208818" stroke-width=".8"/><path d="M3 6l12-2-1 10-10 2z" fill="#58d848"/><rect x="6" y="7" width="5" height="4" fill="#c8f0a8" transform="rotate(-8 8 9)"/></svg><span class="t" style="letter-spacing:-1.4px">BMP2</span></div>
 <div class="btn" style="left:329px"><svg class="abs" style="left:3px;top:1px" width="20" height="18" viewBox="0 0 20 18"><path d="M2 5l4-1 2-2 9 1-1 11-13 3z" fill="#3cc030" stroke="#208818" stroke-width=".8"/><path d="M3 6l12-2-1 10-10 2z" fill="#58d848"/><rect x="6" y="7" width="5" height="4" fill="#c8f0a8" transform="rotate(-8 8 9)"/></svg><span class="t" style="letter-spacing:-.92px">БМП-2</span></div>
 <div class="btn on" style="left:492px"><svg class="abs" style="left:4px;top:2px" width="18" height="18" viewBox="0 0 18 18"><rect width="17" height="17" y=".5" fill="#06080a"/><path d="M16.800 0L17.600 1.400L10.400 9.200L8.800 8Z" fill="#e6e6b4"/><path d="M16.800 0L17.600 1.400L16 3L15 2Z" fill="#fff"/><path d="M9.500 8.600L6.300 12M3.800 6.500L8 10.500" stroke="#3c7c34" stroke-width="1"/><rect x="0" y="5.500" width=".9" height="4.800" fill="#60c040"/><path d="M1.500 15l4 2" stroke="#7a1c1c" stroke-width="1.200"/></svg><span class="t" style="left:26.600px;font-weight:bold;letter-spacing:0">Sknil</span></div>
 <div class="btn" style="left:655px"><svg class="abs" style="left:3px;top:1px" width="18" height="18" viewBox="0 0 18 18"><rect x="0" y="0" width="18" height="17" fill="#2858b0" stroke="#90b0e8" stroke-width="1"/><text x="3" y="13" font-family="Liberation Sans,sans-serif" font-size="10" font-weight="bold" fill="#fff">Ps</text></svg><span class="t" style="left:26.800px;letter-spacing:-.13px">Adobe Photosh...</span></div>
 <div class="btn" style="left:818px"><svg class="abs" style="left:3px;top:0px" width="20" height="20" viewBox="0 0 20 20"><path d="M10 6q-4-2-7 1.500q-2 4 1 8q2 3 6 1.500q4 1.500 6-1.500q1-2 1-3q-3-1-2.500-4q.5-2 2-2.500q-3-3-6.500 0z" fill="#58a0f0" stroke="#1848a8" stroke-width="1.2"/><path d="M10 5q0-3 3-4q0 3-3 4z" fill="#58a0f0" stroke="#1848a8" stroke-width=".8"/></svg><span class="t" style="left:26.300px;letter-spacing:-.18px">AviaSkins.Foru...</span></div>
 <!-- tray -->
 <div class="abs" style="left:1496px;top:7px;width:14px;height:18px;background:#0a246a;overflow:hidden"><span class="t" style="left:1px;top:2px;font-size:13px;color:#fff">RU</span></div>
 <div class="abs" style="left:1514px;top:3px;width:162px;height:24px;border:1px solid;border-color:#808080 #fff #fff #808080"></div>
 <svg class="abs" style="left:1515px;top:6px" width="105" height="22" viewBox="0 0 105 22">
  <circle cx="11" cy="11" r="9" fill="#2878e0" stroke="#1040a0" stroke-width="1"/><path d="M5.500 14.500V8.500h11v6h-2.500v-3.500h-1.800v3.500h-2.400v-3.500h-1.800v3.500z" fill="#fff"/>
  <circle cx="31" cy="11" r="7.500" fill="#f0a818" stroke="#3a2808" stroke-width="1.600"/><path d="M31 6.500l3.500 6h-7z" fill="none" stroke="#3a2808" stroke-width="1.500"/>
  <rect x="43" y="3" width="16" height="15" rx="2" fill="#f8981c" stroke="#5a3008" stroke-width="1.400"/><path d="M48 6.500l6 4-6 4z" fill="#fff0c0"/>
  <path d="M63 3h5v6l4-6h6l-6 8 6 8h-6l-4-6v6h-5z" fill="#e02020"/><path d="M74 9l6 10H68z" fill="#f8d830" stroke="#806000" stroke-width=".8"/>
  <circle cx="88" cy="9" r="6" fill="#888" stroke="#555" stroke-width="1"/><circle cx="87" cy="8" r="2.500" fill="#ddd"/><circle cx="95" cy="15" r="3.500" fill="#c8c8e8" opacity=".8"/>
 </svg>
 <span class="t" style="left:1626px;top:8.100px;font-size:17px;letter-spacing:-.36px">19:53</span>
</div>
</body>
</html>
